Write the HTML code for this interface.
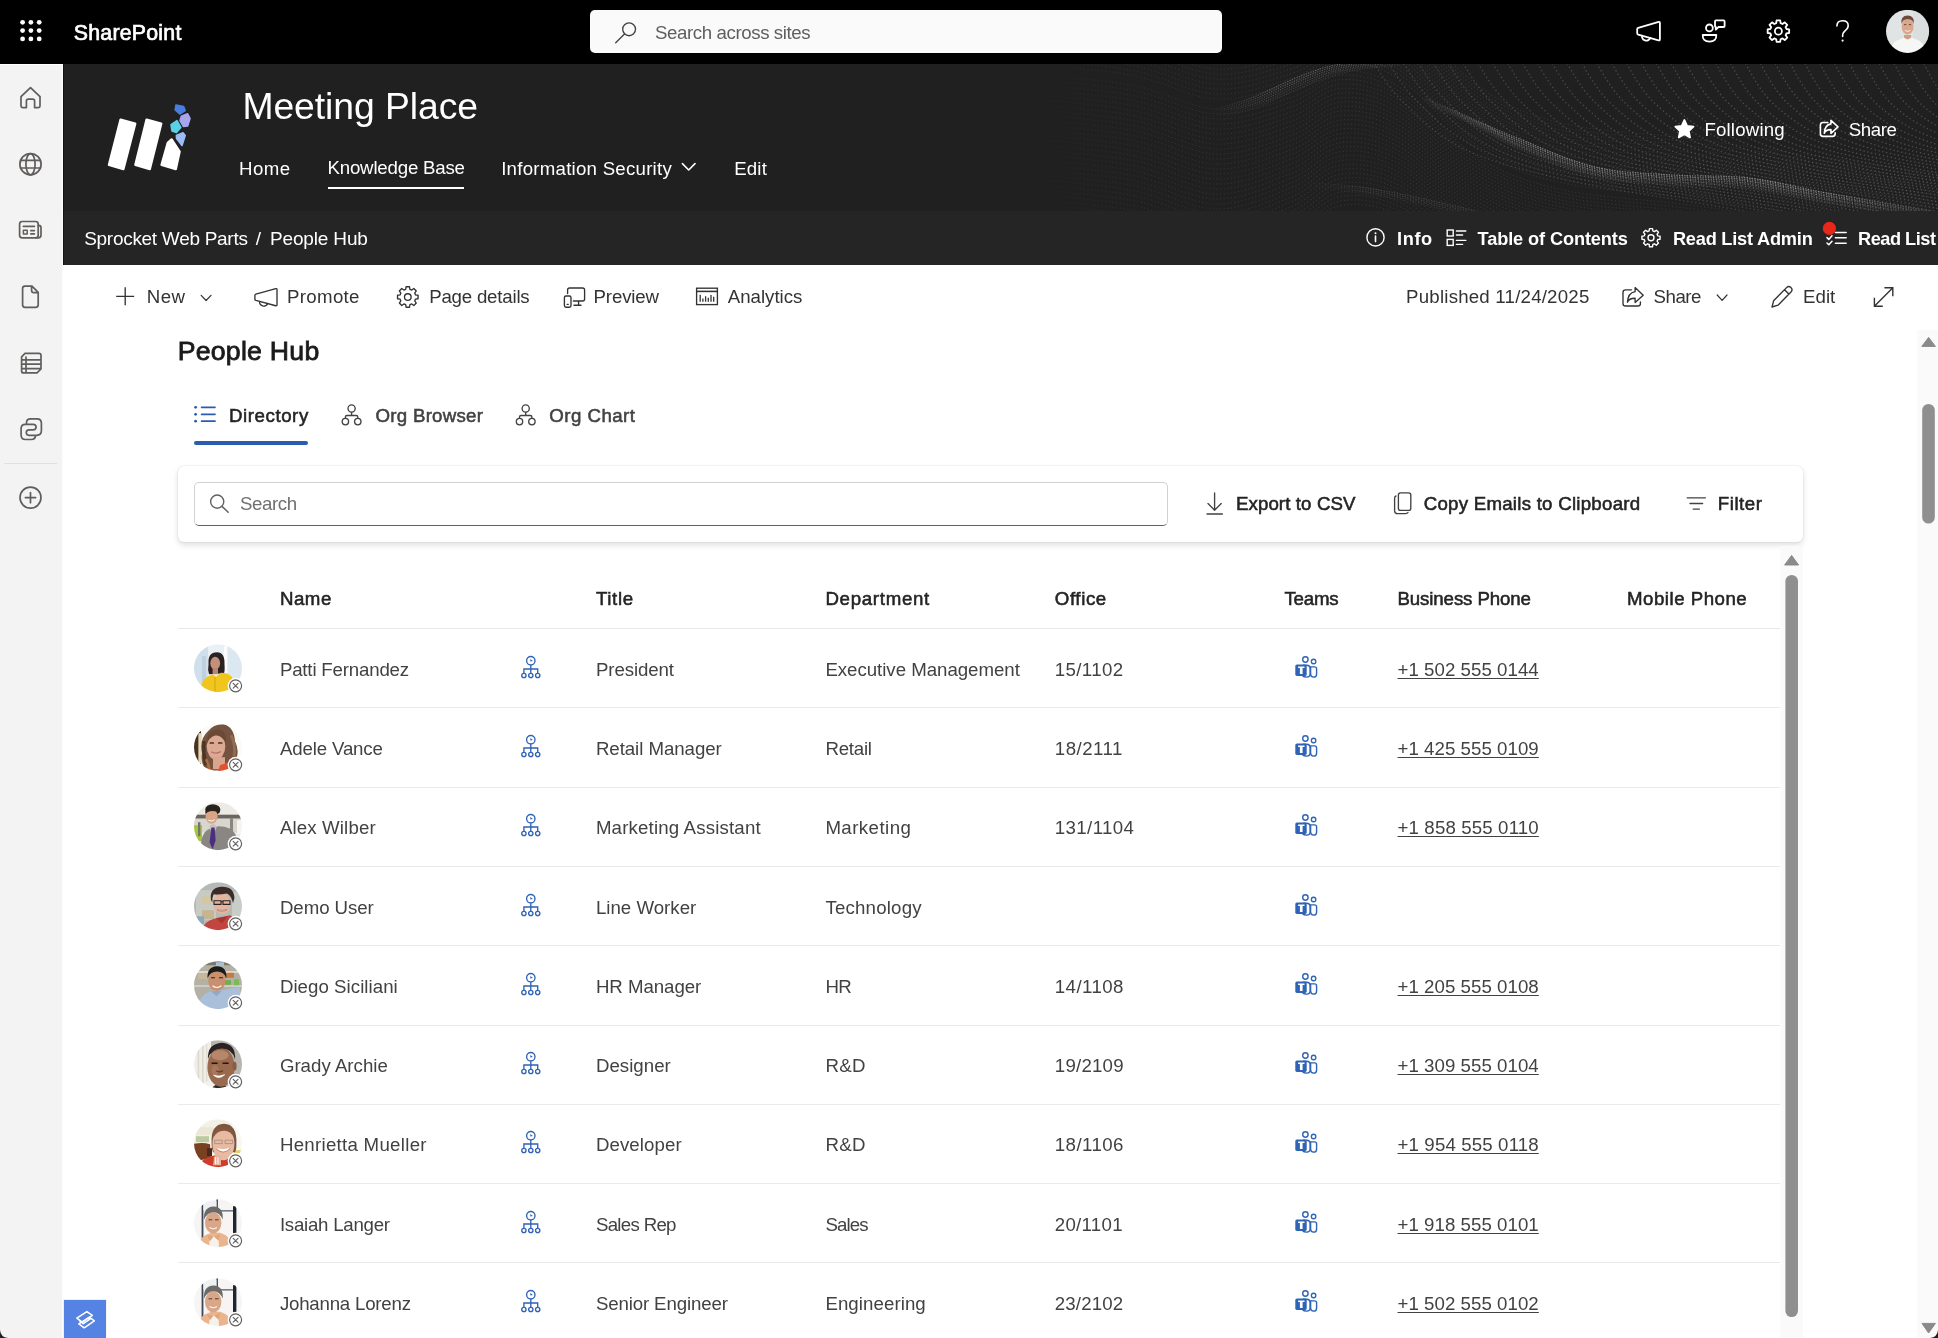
<!DOCTYPE html>
<html lang="en"><head><meta charset="utf-8"><title>People Hub</title>
<style>
*{box-sizing:border-box;margin:0;padding:0}
html,body{width:1938px;height:1338px;overflow:hidden;background:#fff;font-family:"Liberation Sans",sans-serif;}
body{position:relative}
.t{position:absolute;white-space:nowrap;line-height:1;}
.abs{position:absolute}
svg{position:absolute;overflow:visible}
.sb{-webkit-text-stroke:0.55px currentColor}
.sb2{-webkit-text-stroke:0.8px currentColor}
.sb3{-webkit-text-stroke:0.7px currentColor}
#txt{position:absolute;left:0;top:0;width:1938px;height:1338px;will-change:transform}
#suite{position:absolute;left:0;top:0;width:1938px;height:64px;background:#000}
#leftnav{position:absolute;left:0;top:64px;width:63px;height:1274px;background:#f3f3f3;border-top:1px solid #fff;border-right:1px solid #fcfcfc}
#sitehdr{position:absolute;left:63px;top:64px;width:1875px;height:147px;background:#202020;overflow:hidden;border-left:1px solid #111}
#crumbs{position:absolute;left:63px;top:211px;width:1875px;height:54px;background:#252525;border-left:1px solid #131313}
#cmdbar{position:absolute;left:63px;top:265px;width:1875px;height:64px;background:#fff}
#content{position:absolute;left:63px;top:329px;width:1875px;height:1009px;background:#fff}
</style></head>
<body>
<div id="suite"></div>
<div id="leftnav"></div>
<div id="sitehdr"><svg width="1875" height="147" style="left:0;top:0" viewBox="63 64 1875 147"><defs><linearGradient id="wf" x1="0" x2="1" y1="0" y2="0"><stop offset="0" stop-color="#fff" stop-opacity="0"/><stop offset="0.10" stop-color="#fff" stop-opacity="0.7"/><stop offset="0.3" stop-color="#fff" stop-opacity="1"/><stop offset="1" stop-color="#fff" stop-opacity="1"/></linearGradient><mask id="wm" maskUnits="userSpaceOnUse" x="1020" y="64" width="920" height="147"><rect x="1020" y="64" width="920" height="147" fill="url(#wf)"/></mask><linearGradient id="rg1" gradientUnits="userSpaceOnUse" x1="1205" x2="1420" y1="0" y2="0"><stop offset="0" stop-color="#fff" stop-opacity="0"/><stop offset="0.3" stop-color="#fff"/><stop offset="0.8" stop-color="#fff"/><stop offset="1" stop-color="#fff" stop-opacity="0.3"/></linearGradient><linearGradient id="rg2" gradientUnits="userSpaceOnUse" x1="1415" x2="1940" y1="0" y2="0"><stop offset="0" stop-color="#fff" stop-opacity="0"/><stop offset="0.18" stop-color="#fff"/><stop offset="0.75" stop-color="#fff"/><stop offset="1" stop-color="#fff" stop-opacity="0.4"/></linearGradient><linearGradient id="rg3" gradientUnits="userSpaceOnUse" x1="1300" x2="1480" y1="0" y2="0"><stop offset="0" stop-color="#fff" stop-opacity="0"/><stop offset="0.4" stop-color="#fff"/><stop offset="1" stop-color="#fff"/></linearGradient></defs><g mask="url(#wm)" fill="none" stroke="#fff" stroke-linecap="round"><path d="M1015.0 -22.0 C1034.2 -20.0 1096.7 -16.0 1130.0 -10.0 C1163.3 -4.0 1188.3 11.9 1215.0 14.0 C1241.7 16.1 1269.2 7.3 1290.0 2.5 C1310.8 -2.3 1321.7 -15.8 1340.0 -15.0 C1358.3 -14.2 1377.5 -9.1 1400.0 7.5 C1422.5 24.1 1448.3 65.2 1475.0 84.5 C1501.7 103.8 1522.5 113.8 1560.0 123.0 C1597.5 132.2 1635.8 131.3 1700.0 140.0 C1764.2 148.7 1904.2 169.2 1945.0 175.0" stroke-width="1.3" stroke-dasharray="0.1 3.5" stroke-opacity="0.085"/><path d="M1015.0 -17.0 C1034.2 -15.0 1096.7 -11.0 1130.0 -5.0 C1163.3 1.0 1188.3 17.0 1215.0 19.0 C1241.7 21.0 1269.2 12.2 1290.0 7.2 C1310.8 2.3 1321.7 -11.2 1340.0 -10.5 C1358.3 -9.8 1377.5 -4.7 1400.0 11.8 C1422.5 28.2 1448.3 69.1 1475.0 88.2 C1501.7 107.4 1522.5 117.3 1560.0 126.5 C1597.5 135.7 1635.8 134.8 1700.0 143.5 C1764.2 152.2 1904.2 172.7 1945.0 178.5" stroke-width="1.3" stroke-dasharray="0.1 3.5" stroke-opacity="0.085"/><path d="M1015.0 -12.0 C1034.2 -10.0 1096.7 -6.0 1130.0 0.0 C1163.3 6.0 1188.3 22.0 1215.0 24.0 C1241.7 26.0 1269.2 17.0 1290.0 12.0 C1310.8 7.0 1321.7 -6.7 1340.0 -6.0 C1358.3 -5.3 1377.5 -0.3 1400.0 16.0 C1422.5 32.3 1448.3 73.0 1475.0 92.0 C1501.7 111.0 1522.5 120.8 1560.0 130.0 C1597.5 139.2 1635.8 138.3 1700.0 147.0 C1764.2 155.7 1904.2 176.2 1945.0 182.0" stroke-width="1.3" stroke-dasharray="0.1 3.5" stroke-opacity="0.085"/><path d="M1015.0 -7.0 C1034.2 -5.0 1096.7 -1.0 1130.0 5.0 C1163.3 11.0 1188.3 27.0 1215.0 29.0 C1241.7 31.0 1269.2 21.8 1290.0 16.8 C1310.8 11.7 1321.7 -2.1 1340.0 -1.5 C1358.3 -0.9 1377.5 4.0 1400.0 20.2 C1422.5 36.5 1448.3 76.9 1475.0 95.8 C1501.7 114.6 1522.5 124.4 1560.0 133.5 C1597.5 142.6 1635.8 141.8 1700.0 150.5 C1764.2 159.2 1904.2 179.7 1945.0 185.5" stroke-width="1.3" stroke-dasharray="0.1 3.5" stroke-opacity="0.085"/><path d="M1015.0 -2.0 C1034.2 0.0 1096.7 4.0 1130.0 10.0 C1163.3 16.0 1188.3 32.1 1215.0 34.0 C1241.7 35.9 1269.2 26.7 1290.0 21.5 C1310.8 16.3 1321.7 2.5 1340.0 3.0 C1358.3 3.5 1377.5 8.4 1400.0 24.5 C1422.5 40.6 1448.3 80.8 1475.0 99.5 C1501.7 118.2 1522.5 127.9 1560.0 137.0 C1597.5 146.1 1635.8 145.3 1700.0 154.0 C1764.2 162.7 1904.2 183.2 1945.0 189.0" stroke-width="1.3" stroke-dasharray="0.1 3.5" stroke-opacity="0.085"/><path d="M1015.0 3.0 C1034.2 5.0 1096.7 9.0 1130.0 15.0 C1163.3 21.0 1188.3 37.1 1215.0 39.0 C1241.7 40.9 1269.2 31.5 1290.0 26.2 C1310.8 21.0 1321.7 7.1 1340.0 7.5 C1358.3 7.9 1377.5 12.8 1400.0 28.8 C1422.5 44.7 1448.3 84.6 1475.0 103.2 C1501.7 121.9 1522.5 131.5 1560.0 140.5 C1597.5 149.5 1635.8 148.8 1700.0 157.5 C1764.2 166.2 1904.2 186.7 1945.0 192.5" stroke-width="1.3" stroke-dasharray="0.1 3.5" stroke-opacity="0.085"/><path d="M1015.0 8.0 C1034.2 10.0 1096.7 14.0 1130.0 20.0 C1163.3 26.0 1188.3 42.2 1215.0 44.0 C1241.7 45.8 1269.2 36.3 1290.0 31.0 C1310.8 25.7 1321.7 11.7 1340.0 12.0 C1358.3 12.3 1377.5 17.2 1400.0 33.0 C1422.5 48.8 1448.3 88.5 1475.0 107.0 C1501.7 125.5 1522.5 135.0 1560.0 144.0 C1597.5 153.0 1635.8 152.3 1700.0 161.0 C1764.2 169.7 1904.2 190.2 1945.0 196.0" stroke-width="1.3" stroke-dasharray="0.1 3.5" stroke-opacity="0.085"/><path d="M1015.0 13.0 C1034.2 15.0 1096.7 19.0 1130.0 25.0 C1163.3 31.0 1188.3 47.2 1215.0 49.0 C1241.7 50.8 1269.2 41.2 1290.0 35.8 C1310.8 30.3 1321.7 16.2 1340.0 16.5 C1358.3 16.8 1377.5 21.5 1400.0 37.2 C1422.5 53.0 1448.3 92.4 1475.0 110.8 C1501.7 129.1 1522.5 138.5 1560.0 147.5 C1597.5 156.5 1635.8 155.8 1700.0 164.5 C1764.2 173.2 1904.2 193.7 1945.0 199.5" stroke-width="1.3" stroke-dasharray="0.1 3.5" stroke-opacity="0.085"/><path d="M1015.0 18.0 C1034.2 20.0 1096.7 24.0 1130.0 30.0 C1163.3 36.0 1188.3 52.2 1215.0 54.0 C1241.7 55.8 1269.2 46.0 1290.0 40.5 C1310.8 35.0 1321.7 20.8 1340.0 21.0 C1358.3 21.2 1377.5 25.9 1400.0 41.5 C1422.5 57.1 1448.3 96.2 1475.0 114.5 C1501.7 132.8 1522.5 142.1 1560.0 151.0 C1597.5 159.9 1635.8 159.3 1700.0 168.0 C1764.2 176.7 1904.2 197.2 1945.0 203.0" stroke-width="1.3" stroke-dasharray="0.1 3.5" stroke-opacity="0.085"/><path d="M1015.0 23.0 C1034.2 25.0 1096.7 29.0 1130.0 35.0 C1163.3 41.0 1188.3 57.3 1215.0 59.0 C1241.7 60.7 1269.2 50.8 1290.0 45.2 C1310.8 39.7 1321.7 25.4 1340.0 25.5 C1358.3 25.6 1377.5 30.3 1400.0 45.8 C1422.5 61.2 1448.3 100.1 1475.0 118.2 C1501.7 136.4 1522.5 145.6 1560.0 154.5 C1597.5 163.4 1635.8 162.8 1700.0 171.5 C1764.2 180.2 1904.2 200.7 1945.0 206.5" stroke-width="1.3" stroke-dasharray="0.1 3.5" stroke-opacity="0.085"/><path d="M1015.0 28.0 C1034.2 30.0 1096.7 34.0 1130.0 40.0 C1163.3 46.0 1188.3 62.3 1215.0 64.0 C1241.7 65.7 1269.2 55.7 1290.0 50.0 C1310.8 44.3 1321.7 30.0 1340.0 30.0 C1358.3 30.0 1377.5 34.7 1400.0 50.0 C1422.5 65.3 1448.3 104.0 1475.0 122.0 C1501.7 140.0 1522.5 149.2 1560.0 158.0 C1597.5 166.8 1635.8 166.3 1700.0 175.0 C1764.2 183.7 1904.2 204.2 1945.0 210.0" stroke-width="1.3" stroke-dasharray="0.1 3.5" stroke-opacity="0.085"/><path d="M1015.0 33.0 C1034.2 35.0 1096.7 39.0 1130.0 45.0 C1163.3 51.0 1188.3 67.4 1215.0 69.0 C1241.7 70.6 1269.2 60.5 1290.0 54.8 C1310.8 49.0 1321.7 34.6 1340.0 34.5 C1358.3 34.4 1377.5 39.0 1400.0 54.2 C1422.5 69.5 1448.3 107.9 1475.0 125.8 C1501.7 143.6 1522.5 152.7 1560.0 161.5 C1597.5 170.3 1635.8 169.8 1700.0 178.5 C1764.2 187.2 1904.2 207.7 1945.0 213.5" stroke-width="1.3" stroke-dasharray="0.1 3.5" stroke-opacity="0.085"/><path d="M1015.0 38.0 C1034.2 40.0 1096.7 44.0 1130.0 50.0 C1163.3 56.0 1188.3 72.4 1215.0 74.0 C1241.7 75.6 1269.2 65.3 1290.0 59.5 C1310.8 53.7 1321.7 39.2 1340.0 39.0 C1358.3 38.8 1377.5 43.4 1400.0 58.5 C1422.5 73.6 1448.3 111.8 1475.0 129.5 C1501.7 147.2 1522.5 156.2 1560.0 165.0 C1597.5 173.8 1635.8 173.3 1700.0 182.0 C1764.2 190.7 1904.2 211.2 1945.0 217.0" stroke-width="1.3" stroke-dasharray="0.1 3.5" stroke-opacity="0.085"/><path d="M1015.0 43.0 C1034.2 45.0 1096.7 49.0 1130.0 55.0 C1163.3 61.0 1188.3 77.5 1215.0 79.0 C1241.7 80.5 1269.2 70.2 1290.0 64.2 C1310.8 58.3 1321.7 43.8 1340.0 43.5 C1358.3 43.2 1377.5 47.8 1400.0 62.8 C1422.5 77.7 1448.3 115.6 1475.0 133.2 C1501.7 150.9 1522.5 159.8 1560.0 168.5 C1597.5 177.2 1635.8 176.8 1700.0 185.5 C1764.2 194.2 1904.2 214.7 1945.0 220.5" stroke-width="1.3" stroke-dasharray="0.1 3.5" stroke-opacity="0.085"/><path d="M1015.0 48.0 C1034.2 50.0 1096.7 54.0 1130.0 60.0 C1163.3 66.0 1188.3 82.5 1215.0 84.0 C1241.7 85.5 1269.2 75.0 1290.0 69.0 C1310.8 63.0 1321.7 48.3 1340.0 48.0 C1358.3 47.7 1377.5 52.2 1400.0 67.0 C1422.5 81.8 1448.3 119.5 1475.0 137.0 C1501.7 154.5 1522.5 163.3 1560.0 172.0 C1597.5 180.7 1635.8 180.3 1700.0 189.0 C1764.2 197.7 1904.2 218.2 1945.0 224.0" stroke-width="1.3" stroke-dasharray="0.1 3.5" stroke-opacity="0.085"/><path d="M1015.0 53.0 C1034.2 55.0 1096.7 59.0 1130.0 65.0 C1163.3 71.0 1188.3 87.5 1215.0 89.0 C1241.7 90.5 1269.2 79.8 1290.0 73.8 C1310.8 67.7 1321.7 52.9 1340.0 52.5 C1358.3 52.1 1377.5 56.5 1400.0 71.2 C1422.5 86.0 1448.3 123.4 1475.0 140.8 C1501.7 158.1 1522.5 166.9 1560.0 175.5 C1597.5 184.1 1635.8 183.8 1700.0 192.5 C1764.2 201.2 1904.2 221.7 1945.0 227.5" stroke-width="1.3" stroke-dasharray="0.1 3.5" stroke-opacity="0.085"/><path d="M1015.0 58.0 C1034.2 60.0 1096.7 64.0 1130.0 70.0 C1163.3 76.0 1188.3 92.6 1215.0 94.0 C1241.7 95.4 1269.2 84.7 1290.0 78.5 C1310.8 72.3 1321.7 57.5 1340.0 57.0 C1358.3 56.5 1377.5 60.9 1400.0 75.5 C1422.5 90.1 1448.3 127.2 1475.0 144.5 C1501.7 161.8 1522.5 170.4 1560.0 179.0 C1597.5 187.6 1635.8 187.3 1700.0 196.0 C1764.2 204.7 1904.2 225.2 1945.0 231.0" stroke-width="1.3" stroke-dasharray="0.1 3.5" stroke-opacity="0.085"/><path d="M1015.0 63.0 C1034.2 65.0 1096.7 69.0 1130.0 75.0 C1163.3 81.0 1188.3 97.6 1215.0 99.0 C1241.7 100.4 1269.2 89.5 1290.0 83.2 C1310.8 77.0 1321.7 62.1 1340.0 61.5 C1358.3 60.9 1377.5 65.3 1400.0 79.8 C1422.5 94.2 1448.3 131.1 1475.0 148.2 C1501.7 165.4 1522.5 174.0 1560.0 182.5 C1597.5 191.0 1635.8 190.8 1700.0 199.5 C1764.2 208.2 1904.2 228.7 1945.0 234.5" stroke-width="1.3" stroke-dasharray="0.1 3.5" stroke-opacity="0.085"/><path d="M1015.0 68.0 C1034.2 70.0 1096.7 74.0 1130.0 80.0 C1163.3 86.0 1188.3 102.7 1215.0 104.0 C1241.7 105.3 1269.2 94.3 1290.0 88.0 C1310.8 81.7 1321.7 66.7 1340.0 66.0 C1358.3 65.3 1377.5 69.7 1400.0 84.0 C1422.5 98.3 1448.3 135.0 1475.0 152.0 C1501.7 169.0 1522.5 177.5 1560.0 186.0 C1597.5 194.5 1635.8 194.3 1700.0 203.0 C1764.2 211.7 1904.2 232.2 1945.0 238.0" stroke-width="1.3" stroke-dasharray="0.1 3.5" stroke-opacity="0.000"/><path d="M1015.0 73.0 C1034.2 75.0 1096.7 79.0 1130.0 85.0 C1163.3 91.0 1188.3 107.7 1215.0 109.0 C1241.7 110.3 1269.2 99.2 1290.0 92.8 C1310.8 86.3 1321.7 71.2 1340.0 70.5 C1358.3 69.8 1377.5 74.0 1400.0 88.2 C1422.5 102.5 1448.3 138.9 1475.0 155.8 C1501.7 172.6 1522.5 181.0 1560.0 189.5 C1597.5 198.0 1635.8 197.8 1700.0 206.5 C1764.2 215.2 1904.2 235.7 1945.0 241.5" stroke-width="1.3" stroke-dasharray="0.1 3.5" stroke-opacity="0.085"/><path d="M1015.0 78.0 C1034.2 80.0 1096.7 84.0 1130.0 90.0 C1163.3 96.0 1188.3 112.8 1215.0 114.0 C1241.7 115.2 1269.2 104.0 1290.0 97.5 C1310.8 91.0 1321.7 75.8 1340.0 75.0 C1358.3 74.2 1377.5 78.4 1400.0 92.5 C1422.5 106.6 1448.3 142.8 1475.0 159.5 C1501.7 176.2 1522.5 184.6 1560.0 193.0 C1597.5 201.4 1635.8 201.3 1700.0 210.0 C1764.2 218.7 1904.2 239.2 1945.0 245.0" stroke-width="1.3" stroke-dasharray="0.1 3.5" stroke-opacity="0.085"/><path d="M1015.0 83.0 C1034.2 85.0 1096.7 89.0 1130.0 95.0 C1163.3 101.0 1188.3 117.8 1215.0 119.0 C1241.7 120.2 1269.2 108.8 1290.0 102.2 C1310.8 95.7 1321.7 80.4 1340.0 79.5 C1358.3 78.6 1377.5 82.8 1400.0 96.8 C1422.5 110.7 1448.3 146.6 1475.0 163.2 C1501.7 179.9 1522.5 188.1 1560.0 196.5 C1597.5 204.9 1635.8 204.8 1700.0 213.5 C1764.2 222.2 1904.2 242.7 1945.0 248.5" stroke-width="1.3" stroke-dasharray="0.1 3.5" stroke-opacity="0.085"/><path d="M1015.0 88.0 C1034.2 90.0 1096.7 94.0 1130.0 100.0 C1163.3 106.0 1188.3 122.8 1215.0 124.0 C1241.7 125.2 1269.2 113.7 1290.0 107.0 C1310.8 100.3 1321.7 85.0 1340.0 84.0 C1358.3 83.0 1377.5 87.2 1400.0 101.0 C1422.5 114.8 1448.3 150.5 1475.0 167.0 C1501.7 183.5 1522.5 191.7 1560.0 200.0 C1597.5 208.3 1635.8 208.3 1700.0 217.0 C1764.2 225.7 1904.2 246.2 1945.0 252.0" stroke-width="1.3" stroke-dasharray="0.1 3.5" stroke-opacity="0.085"/><path d="M1015.0 93.0 C1034.2 95.0 1096.7 99.0 1130.0 105.0 C1163.3 111.0 1188.3 127.9 1215.0 129.0 C1241.7 130.1 1269.2 118.5 1290.0 111.8 C1310.8 105.0 1321.7 89.6 1340.0 88.5 C1358.3 87.4 1377.5 91.5 1400.0 105.2 C1422.5 119.0 1448.3 154.4 1475.0 170.8 C1501.7 187.1 1522.5 195.2 1560.0 203.5 C1597.5 211.8 1635.8 211.8 1700.0 220.5 C1764.2 229.2 1904.2 249.7 1945.0 255.5" stroke-width="1.3" stroke-dasharray="0.1 3.5" stroke-opacity="0.085"/><path d="M1015.0 98.0 C1034.2 100.0 1096.7 104.0 1130.0 110.0 C1163.3 116.0 1188.3 132.9 1215.0 134.0 C1241.7 135.1 1269.2 123.3 1290.0 116.5 C1310.8 109.7 1321.7 94.2 1340.0 93.0 C1358.3 91.8 1377.5 95.9 1400.0 109.5 C1422.5 123.1 1448.3 158.2 1475.0 174.5 C1501.7 190.8 1522.5 198.8 1560.0 207.0 C1597.5 215.2 1635.8 215.3 1700.0 224.0 C1764.2 232.7 1904.2 253.2 1945.0 259.0" stroke-width="1.3" stroke-dasharray="0.1 3.5" stroke-opacity="0.085"/><path d="M1015.0 103.0 C1034.2 105.0 1096.7 109.0 1130.0 115.0 C1163.3 121.0 1188.3 138.0 1215.0 139.0 C1241.7 140.0 1269.2 128.2 1290.0 121.2 C1310.8 114.3 1321.7 98.8 1340.0 97.5 C1358.3 96.2 1377.5 100.3 1400.0 113.8 C1422.5 127.2 1448.3 162.1 1475.0 178.2 C1501.7 194.4 1522.5 202.3 1560.0 210.5 C1597.5 218.7 1635.8 218.8 1700.0 227.5 C1764.2 236.2 1904.2 256.7 1945.0 262.5" stroke-width="1.3" stroke-dasharray="0.1 3.5" stroke-opacity="0.085"/><path d="M1015.0 108.0 C1034.2 110.0 1096.7 114.0 1130.0 120.0 C1163.3 126.0 1188.3 143.0 1215.0 144.0 C1241.7 145.0 1269.2 133.0 1290.0 126.0 C1310.8 119.0 1321.7 103.3 1340.0 102.0 C1358.3 100.7 1377.5 104.7 1400.0 118.0 C1422.5 131.3 1448.3 166.0 1475.0 182.0 C1501.7 198.0 1522.5 205.8 1560.0 214.0 C1597.5 222.2 1635.8 222.3 1700.0 231.0 C1764.2 239.7 1904.2 260.2 1945.0 266.0" stroke-width="1.3" stroke-dasharray="0.1 3.5" stroke-opacity="0.085"/><path d="M1015.0 113.0 C1034.2 115.0 1096.7 119.0 1130.0 125.0 C1163.3 131.0 1188.3 148.0 1215.0 149.0 C1241.7 150.0 1269.2 137.8 1290.0 130.8 C1310.8 123.7 1321.7 107.9 1340.0 106.5 C1358.3 105.1 1377.5 109.0 1400.0 122.2 C1422.5 135.5 1448.3 169.9 1475.0 185.8 C1501.7 201.6 1522.5 209.4 1560.0 217.5 C1597.5 225.6 1635.8 225.8 1700.0 234.5 C1764.2 243.2 1904.2 263.7 1945.0 269.5" stroke-width="1.3" stroke-dasharray="0.1 3.5" stroke-opacity="0.085"/><path d="M1015.0 118.0 C1034.2 120.0 1096.7 124.0 1130.0 130.0 C1163.3 136.0 1188.3 153.1 1215.0 154.0 C1241.7 154.9 1269.2 142.7 1290.0 135.5 C1310.8 128.3 1321.7 112.5 1340.0 111.0 C1358.3 109.5 1377.5 113.4 1400.0 126.5 C1422.5 139.6 1448.3 173.8 1475.0 189.5 C1501.7 205.2 1522.5 212.9 1560.0 221.0 C1597.5 229.1 1635.8 229.3 1700.0 238.0 C1764.2 246.7 1904.2 267.2 1945.0 273.0" stroke-width="1.3" stroke-dasharray="0.1 3.5" stroke-opacity="0.085"/><path d="M1015.0 123.0 C1034.2 125.0 1096.7 129.0 1130.0 135.0 C1163.3 141.0 1188.3 158.1 1215.0 159.0 C1241.7 159.9 1269.2 147.5 1290.0 140.2 C1310.8 133.0 1321.7 117.1 1340.0 115.5 C1358.3 113.9 1377.5 117.8 1400.0 130.8 C1422.5 143.7 1448.3 177.6 1475.0 193.2 C1501.7 208.9 1522.5 216.5 1560.0 224.5 C1597.5 232.5 1635.8 232.8 1700.0 241.5 C1764.2 250.2 1904.2 270.7 1945.0 276.5" stroke-width="1.3" stroke-dasharray="0.1 3.5" stroke-opacity="0.085"/><path d="M1015.0 128.0 C1034.2 130.0 1096.7 134.0 1130.0 140.0 C1163.3 146.0 1188.3 163.2 1215.0 164.0 C1241.7 164.8 1269.2 152.3 1290.0 145.0 C1310.8 137.7 1321.7 121.7 1340.0 120.0 C1358.3 118.3 1377.5 122.2 1400.0 135.0 C1422.5 147.8 1448.3 181.5 1475.0 197.0 C1501.7 212.5 1522.5 220.0 1560.0 228.0 C1597.5 236.0 1635.8 236.3 1700.0 245.0 C1764.2 253.7 1904.2 274.2 1945.0 280.0" stroke-width="1.3" stroke-dasharray="0.1 3.5" stroke-opacity="0.085"/><path d="M1015.0 133.0 C1034.2 135.0 1096.7 139.0 1130.0 145.0 C1163.3 151.0 1188.3 168.2 1215.0 169.0 C1241.7 169.8 1269.2 157.2 1290.0 149.8 C1310.8 142.3 1321.7 126.2 1340.0 124.5 C1358.3 122.8 1377.5 126.5 1400.0 139.2 C1422.5 152.0 1448.3 185.4 1475.0 200.8 C1501.7 216.1 1522.5 223.5 1560.0 231.5 C1597.5 239.5 1635.8 239.8 1700.0 248.5 C1764.2 257.2 1904.2 277.7 1945.0 283.5" stroke-width="1.3" stroke-dasharray="0.1 3.5" stroke-opacity="0.085"/><path d="M1015.0 138.0 C1034.2 140.0 1096.7 144.0 1130.0 150.0 C1163.3 156.0 1188.3 173.2 1215.0 174.0 C1241.7 174.8 1269.2 162.0 1290.0 154.5 C1310.8 147.0 1321.7 130.8 1340.0 129.0 C1358.3 127.2 1377.5 130.9 1400.0 143.5 C1422.5 156.1 1448.3 189.2 1475.0 204.5 C1501.7 219.8 1522.5 227.1 1560.0 235.0 C1597.5 242.9 1635.8 243.3 1700.0 252.0 C1764.2 260.7 1904.2 281.2 1945.0 287.0" stroke-width="1.3" stroke-dasharray="0.1 3.5" stroke-opacity="0.085"/><path d="M1015.0 143.0 C1034.2 145.0 1096.7 149.0 1130.0 155.0 C1163.3 161.0 1188.3 178.3 1215.0 179.0 C1241.7 179.7 1269.2 166.8 1290.0 159.2 C1310.8 151.7 1321.7 135.4 1340.0 133.5 C1358.3 131.6 1377.5 135.3 1400.0 147.8 C1422.5 160.2 1448.3 193.1 1475.0 208.2 C1501.7 223.4 1522.5 230.6 1560.0 238.5 C1597.5 246.4 1635.8 246.8 1700.0 255.5 C1764.2 264.2 1904.2 284.7 1945.0 290.5" stroke-width="1.3" stroke-dasharray="0.1 3.5" stroke-opacity="0.085"/><path d="M1015.0 148.0 C1034.2 150.0 1096.7 154.0 1130.0 160.0 C1163.3 166.0 1188.3 183.3 1215.0 184.0 C1241.7 184.7 1269.2 171.7 1290.0 164.0 C1310.8 156.3 1321.7 140.0 1340.0 138.0 C1358.3 136.0 1377.5 139.7 1400.0 152.0 C1422.5 164.3 1448.3 197.0 1475.0 212.0 C1501.7 227.0 1522.5 234.2 1560.0 242.0 C1597.5 249.8 1635.8 250.3 1700.0 259.0 C1764.2 267.7 1904.2 288.2 1945.0 294.0" stroke-width="1.3" stroke-dasharray="0.1 3.5" stroke-opacity="0.085"/><path d="M1015.0 153.0 C1034.2 155.0 1096.7 159.0 1130.0 165.0 C1163.3 171.0 1188.3 188.4 1215.0 189.0 C1241.7 189.6 1269.2 176.5 1290.0 168.8 C1310.8 161.0 1321.7 144.6 1340.0 142.5 C1358.3 140.4 1377.5 144.0 1400.0 156.2 C1422.5 168.5 1448.3 200.9 1475.0 215.8 C1501.7 230.6 1522.5 237.7 1560.0 245.5 C1597.5 253.3 1635.8 253.8 1700.0 262.5 C1764.2 271.2 1904.2 291.7 1945.0 297.5" stroke-width="1.3" stroke-dasharray="0.1 3.5" stroke-opacity="0.085"/><path d="M1015.0 158.0 C1034.2 160.0 1096.7 164.0 1130.0 170.0 C1163.3 176.0 1188.3 193.4 1215.0 194.0 C1241.7 194.6 1269.2 181.3 1290.0 173.5 C1310.8 165.7 1321.7 149.2 1340.0 147.0 C1358.3 144.8 1377.5 148.4 1400.0 160.5 C1422.5 172.6 1448.3 204.8 1475.0 219.5 C1501.7 234.2 1522.5 241.2 1560.0 249.0 C1597.5 256.8 1635.8 257.3 1700.0 266.0 C1764.2 274.7 1904.2 295.2 1945.0 301.0" stroke-width="1.3" stroke-dasharray="0.1 3.5" stroke-opacity="0.085"/><path d="M1015.0 163.0 C1034.2 165.0 1096.7 169.0 1130.0 175.0 C1163.3 181.0 1188.3 198.5 1215.0 199.0 C1241.7 199.5 1269.2 186.2 1290.0 178.2 C1310.8 170.3 1321.7 153.8 1340.0 151.5 C1358.3 149.2 1377.5 152.8 1400.0 164.8 C1422.5 176.7 1448.3 208.6 1475.0 223.2 C1501.7 237.9 1522.5 244.8 1560.0 252.5 C1597.5 260.2 1635.8 260.8 1700.0 269.5 C1764.2 278.2 1904.2 298.7 1945.0 304.5" stroke-width="1.3" stroke-dasharray="0.1 3.5" stroke-opacity="0.085"/><path d="M1015.0 168.0 C1034.2 170.0 1096.7 174.0 1130.0 180.0 C1163.3 186.0 1188.3 203.5 1215.0 204.0 C1241.7 204.5 1269.2 191.0 1290.0 183.0 C1310.8 175.0 1321.7 158.3 1340.0 156.0 C1358.3 153.7 1377.5 157.2 1400.0 169.0 C1422.5 180.8 1448.3 212.5 1475.0 227.0 C1501.7 241.5 1522.5 248.3 1560.0 256.0 C1597.5 263.7 1635.8 264.3 1700.0 273.0 C1764.2 281.7 1904.2 302.2 1945.0 308.0" stroke-width="1.3" stroke-dasharray="0.1 3.5" stroke-opacity="0.085"/><path d="M1015.0 173.0 C1034.2 175.0 1096.7 179.0 1130.0 185.0 C1163.3 191.0 1188.3 208.5 1215.0 209.0 C1241.7 209.5 1269.2 195.8 1290.0 187.8 C1310.8 179.7 1321.7 162.9 1340.0 160.5 C1358.3 158.1 1377.5 161.5 1400.0 173.2 C1422.5 185.0 1448.3 216.4 1475.0 230.8 C1501.7 245.1 1522.5 251.9 1560.0 259.5 C1597.5 267.1 1635.8 267.8 1700.0 276.5 C1764.2 285.2 1904.2 305.7 1945.0 311.5" stroke-width="1.3" stroke-dasharray="0.1 3.5" stroke-opacity="0.085"/><path d="M1015.0 178.0 C1034.2 180.0 1096.7 184.0 1130.0 190.0 C1163.3 196.0 1188.3 213.6 1215.0 214.0 C1241.7 214.4 1269.2 200.7 1290.0 192.5 C1310.8 184.3 1321.7 167.5 1340.0 165.0 C1358.3 162.5 1377.5 165.9 1400.0 177.5 C1422.5 189.1 1448.3 220.2 1475.0 234.5 C1501.7 248.8 1522.5 255.4 1560.0 263.0 C1597.5 270.6 1635.8 271.3 1700.0 280.0 C1764.2 288.7 1904.2 309.2 1945.0 315.0" stroke-width="1.3" stroke-dasharray="0.1 3.5" stroke-opacity="0.085"/><path d="M1015.0 183.0 C1034.2 185.0 1096.7 189.0 1130.0 195.0 C1163.3 201.0 1188.3 218.6 1215.0 219.0 C1241.7 219.4 1269.2 205.5 1290.0 197.2 C1310.8 189.0 1321.7 172.1 1340.0 169.5 C1358.3 166.9 1377.5 170.3 1400.0 181.8 C1422.5 193.2 1448.3 224.1 1475.0 238.2 C1501.7 252.4 1522.5 259.0 1560.0 266.5 C1597.5 274.0 1635.8 274.8 1700.0 283.5 C1764.2 292.2 1904.2 312.7 1945.0 318.5" stroke-width="1.3" stroke-dasharray="0.1 3.5" stroke-opacity="0.085"/><path d="M1015.0 188.0 C1034.2 190.0 1096.7 194.0 1130.0 200.0 C1163.3 206.0 1188.3 223.7 1215.0 224.0 C1241.7 224.3 1269.2 210.3 1290.0 202.0 C1310.8 193.7 1321.7 176.7 1340.0 174.0 C1358.3 171.3 1377.5 174.7 1400.0 186.0 C1422.5 197.3 1448.3 228.0 1475.0 242.0 C1501.7 256.0 1522.5 262.5 1560.0 270.0 C1597.5 277.5 1635.8 278.3 1700.0 287.0 C1764.2 295.7 1904.2 316.2 1945.0 322.0" stroke-width="1.3" stroke-dasharray="0.1 3.5" stroke-opacity="0.085"/><path d="M1015.0 193.0 C1034.2 195.0 1096.7 199.0 1130.0 205.0 C1163.3 211.0 1188.3 228.7 1215.0 229.0 C1241.7 229.3 1269.2 215.2 1290.0 206.8 C1310.8 198.3 1321.7 181.2 1340.0 178.5 C1358.3 175.8 1377.5 179.0 1400.0 190.2 C1422.5 201.5 1448.3 231.9 1475.0 245.8 C1501.7 259.6 1522.5 266.0 1560.0 273.5 C1597.5 281.0 1635.8 281.8 1700.0 290.5 C1764.2 299.2 1904.2 319.7 1945.0 325.5" stroke-width="1.3" stroke-dasharray="0.1 3.5" stroke-opacity="0.085"/><path d="M1015.0 198.0 C1034.2 200.0 1096.7 204.0 1130.0 210.0 C1163.3 216.0 1188.3 233.8 1215.0 234.0 C1241.7 234.2 1269.2 220.0 1290.0 211.5 C1310.8 203.0 1321.7 185.8 1340.0 183.0 C1358.3 180.2 1377.5 183.4 1400.0 194.5 C1422.5 205.6 1448.3 235.8 1475.0 249.5 C1501.7 263.2 1522.5 269.6 1560.0 277.0 C1597.5 284.4 1635.8 285.3 1700.0 294.0 C1764.2 302.7 1904.2 323.2 1945.0 329.0" stroke-width="1.3" stroke-dasharray="0.1 3.5" stroke-opacity="0.085"/><path d="M1015.0 203.0 C1034.2 205.0 1096.7 209.0 1130.0 215.0 C1163.3 221.0 1188.3 238.8 1215.0 239.0 C1241.7 239.2 1269.2 224.8 1290.0 216.2 C1310.8 207.7 1321.7 190.4 1340.0 187.5 C1358.3 184.6 1377.5 187.8 1400.0 198.8 C1422.5 209.7 1448.3 239.6 1475.0 253.2 C1501.7 266.9 1522.5 273.1 1560.0 280.5 C1597.5 287.9 1635.8 288.8 1700.0 297.5 C1764.2 306.2 1904.2 326.7 1945.0 332.5" stroke-width="1.3" stroke-dasharray="0.1 3.5" stroke-opacity="0.085"/><path d="M1015.0 208.0 C1034.2 210.0 1096.7 214.0 1130.0 220.0 C1163.3 226.0 1188.3 243.8 1215.0 244.0 C1241.7 244.2 1269.2 229.7 1290.0 221.0 C1310.8 212.3 1321.7 195.0 1340.0 192.0 C1358.3 189.0 1377.5 192.2 1400.0 203.0 C1422.5 213.8 1448.3 243.5 1475.0 257.0 C1501.7 270.5 1522.5 276.7 1560.0 284.0 C1597.5 291.3 1635.8 292.3 1700.0 301.0 C1764.2 309.7 1904.2 330.2 1945.0 336.0" stroke-width="1.3" stroke-dasharray="0.1 3.5" stroke-opacity="0.085"/><path d="M1015.0 213.0 C1034.2 215.0 1096.7 219.0 1130.0 225.0 C1163.3 231.0 1188.3 248.9 1215.0 249.0 C1241.7 249.1 1269.2 234.5 1290.0 225.8 C1310.8 217.0 1321.7 199.6 1340.0 196.5 C1358.3 193.4 1377.5 196.5 1400.0 207.2 C1422.5 218.0 1448.3 247.4 1475.0 260.8 C1501.7 274.1 1522.5 280.2 1560.0 287.5 C1597.5 294.8 1635.8 295.8 1700.0 304.5 C1764.2 313.2 1904.2 333.7 1945.0 339.5" stroke-width="1.3" stroke-dasharray="0.1 3.5" stroke-opacity="0.085"/><path d="M1015.0 218.0 C1034.2 220.0 1096.7 224.0 1130.0 230.0 C1163.3 236.0 1188.3 253.9 1215.0 254.0 C1241.7 254.1 1269.2 239.3 1290.0 230.5 C1310.8 221.7 1321.7 204.2 1340.0 201.0 C1358.3 197.8 1377.5 200.9 1400.0 211.5 C1422.5 222.1 1448.3 251.2 1475.0 264.5 C1501.7 277.8 1522.5 283.8 1560.0 291.0 C1597.5 298.2 1635.8 299.3 1700.0 308.0 C1764.2 316.7 1904.2 337.2 1945.0 343.0" stroke-width="1.3" stroke-dasharray="0.1 3.5" stroke-opacity="0.085"/><path d="M1015.0 223.0 C1034.2 225.0 1096.7 229.0 1130.0 235.0 C1163.3 241.0 1188.3 259.0 1215.0 259.0 C1241.7 259.0 1269.2 244.2 1290.0 235.2 C1310.8 226.3 1321.7 208.8 1340.0 205.5 C1358.3 202.2 1377.5 205.3 1400.0 215.8 C1422.5 226.2 1448.3 255.1 1475.0 268.2 C1501.7 281.4 1522.5 287.3 1560.0 294.5 C1597.5 301.7 1635.8 302.8 1700.0 311.5 C1764.2 320.2 1904.2 340.7 1945.0 346.5" stroke-width="1.3" stroke-dasharray="0.1 3.5" stroke-opacity="0.085"/><path d="M1205.0 112.0 C1212.5 109.7 1235.0 103.7 1250.0 98.0 C1265.0 92.3 1280.8 83.5 1295.0 78.0 C1309.2 72.5 1317.5 68.3 1335.0 65.0 C1352.5 61.7 1389.2 59.2 1400.0 58.0" stroke="url(#rg1)" stroke-width="1.3" stroke-dasharray="0.1 2.4" stroke-opacity="0.300"/><path d="M1207.0 113.5 C1214.5 111.2 1237.0 105.2 1252.0 99.5 C1267.0 93.8 1282.7 85.0 1297.0 79.5 C1311.3 74.0 1320.2 69.6 1338.0 66.2 C1355.8 62.8 1393.0 60.2 1404.0 59.0" stroke="url(#rg1)" stroke-width="1.3" stroke-dasharray="0.1 2.4" stroke-opacity="0.260"/><path d="M1209.0 115.0 C1216.5 112.7 1239.0 106.7 1254.0 101.0 C1269.0 95.3 1284.5 86.6 1299.0 81.0 C1313.5 75.4 1322.8 70.9 1341.0 67.4 C1359.2 63.9 1396.8 61.2 1408.0 60.0" stroke="url(#rg1)" stroke-width="1.3" stroke-dasharray="0.1 2.4" stroke-opacity="0.220"/><path d="M1211.0 116.5 C1218.5 114.2 1241.0 108.2 1256.0 102.5 C1271.0 96.8 1286.3 88.2 1301.0 82.5 C1315.7 76.8 1325.5 72.2 1344.0 68.6 C1362.5 65.0 1400.7 62.3 1412.0 61.0" stroke="url(#rg1)" stroke-width="1.3" stroke-dasharray="0.1 2.4" stroke-opacity="0.180"/><path d="M1213.0 118.0 C1220.5 115.7 1243.0 109.7 1258.0 104.0 C1273.0 98.3 1288.2 89.7 1303.0 84.0 C1317.8 78.3 1328.2 73.5 1347.0 69.8 C1365.8 66.1 1404.5 63.3 1416.0 62.0" stroke="url(#rg1)" stroke-width="1.3" stroke-dasharray="0.1 2.4" stroke-opacity="0.140"/><path d="M1215.0 119.5 C1222.5 117.2 1245.0 111.2 1260.0 105.5 C1275.0 99.8 1290.0 91.2 1305.0 85.5 C1320.0 79.8 1330.8 74.8 1350.0 71.0 C1369.2 67.2 1408.3 64.3 1420.0 63.0" stroke="url(#rg1)" stroke-width="1.3" stroke-dasharray="0.1 2.4" stroke-opacity="0.100"/><path d="M1365.0 50.0 C1370.8 58.3 1383.3 83.3 1400.0 100.0 C1416.7 116.7 1435.8 136.3 1465.0 150.0 C1494.2 163.7 1533.3 172.7 1575.0 182.0 C1616.7 191.3 1666.7 197.7 1715.0 206.0 C1763.3 214.3 1840.0 227.7 1865.0 232.0" stroke-width="1.45" stroke-dasharray="0.1 3.9" stroke-opacity="0.150"/><path d="M1379.9 50.0 C1385.7 58.4 1398.2 83.5 1414.9 100.1 C1431.6 116.8 1450.7 136.2 1479.9 149.7 C1509.1 163.3 1548.2 172.2 1589.9 181.4 C1631.6 190.7 1681.6 197.0 1729.9 205.3 C1778.2 213.6 1854.9 227.0 1879.9 231.3" stroke-width="1.45" stroke-dasharray="0.1 3.9" stroke-opacity="0.153"/><path d="M1394.8 50.0 C1400.6 58.4 1413.1 83.7 1429.8 100.3 C1446.4 116.9 1465.6 136.0 1494.8 149.4 C1523.9 162.9 1563.1 171.7 1604.8 180.9 C1646.4 190.1 1696.4 196.3 1744.8 204.6 C1793.1 212.9 1869.8 226.3 1894.8 230.6" stroke-width="1.45" stroke-dasharray="0.1 3.9" stroke-opacity="0.156"/><path d="M1409.7 50.0 C1415.5 58.4 1428.0 83.9 1444.7 100.4 C1461.3 116.9 1480.5 135.8 1509.7 149.2 C1538.8 162.5 1578.0 171.2 1619.7 180.3 C1661.3 189.4 1711.3 195.6 1759.7 203.9 C1808.0 212.2 1884.7 225.6 1909.7 229.9" stroke-width="1.45" stroke-dasharray="0.1 3.9" stroke-opacity="0.160"/><path d="M1424.5 50.0 C1430.4 58.4 1442.9 84.1 1459.5 100.6 C1476.2 117.0 1495.4 135.7 1524.5 148.9 C1553.7 162.1 1592.9 170.7 1634.5 179.8 C1676.2 188.8 1726.2 195.0 1774.5 203.2 C1822.9 211.4 1899.5 224.9 1924.5 229.2" stroke-width="1.45" stroke-dasharray="0.1 3.9" stroke-opacity="0.163"/><path d="M1439.4 50.0 C1445.3 58.4 1457.8 84.3 1474.4 100.7 C1491.1 117.1 1510.3 135.5 1539.4 148.6 C1568.6 161.7 1607.8 170.2 1649.4 179.2 C1691.1 188.2 1741.1 194.3 1789.4 202.5 C1837.8 210.7 1914.4 224.2 1939.4 228.5" stroke-width="1.45" stroke-dasharray="0.1 3.9" stroke-opacity="0.166"/><path d="M1454.3 50.0 C1460.1 58.5 1472.6 84.4 1489.3 100.8 C1506.0 117.2 1525.1 135.4 1554.3 148.3 C1583.5 161.3 1622.6 169.7 1664.3 178.7 C1706.0 187.6 1756.0 193.6 1804.3 201.8 C1852.6 210.0 1929.3 223.5 1954.3 227.8" stroke-width="1.45" stroke-dasharray="0.1 3.9" stroke-opacity="0.169"/><path d="M1469.2 50.0 C1475.0 58.5 1487.5 84.6 1504.2 101.0 C1520.9 117.3 1540.0 135.2 1569.2 148.0 C1598.4 160.9 1637.5 169.2 1679.2 178.1 C1720.9 186.9 1770.9 192.9 1819.2 201.1 C1867.5 209.3 1944.2 222.8 1969.2 227.1" stroke-width="1.45" stroke-dasharray="0.1 3.9" stroke-opacity="0.172"/><path d="M1484.1 50.0 C1489.9 58.5 1502.4 84.8 1519.1 101.1 C1535.7 117.4 1554.9 135.0 1584.1 147.8 C1613.2 160.5 1652.4 168.8 1694.1 177.5 C1735.7 186.3 1785.7 192.3 1834.1 200.4 C1882.4 208.6 1959.1 222.1 1984.1 226.4" stroke-width="1.45" stroke-dasharray="0.1 3.9" stroke-opacity="0.175"/><path d="M1499.0 50.0 C1504.8 58.5 1517.3 85.0 1534.0 101.3 C1550.6 117.5 1569.8 134.9 1599.0 147.5 C1628.1 160.1 1667.3 168.3 1709.0 177.0 C1750.6 185.7 1800.6 191.6 1849.0 199.7 C1897.3 207.8 1974.0 221.4 1999.0 225.7" stroke-width="1.45" stroke-dasharray="0.1 3.9" stroke-opacity="0.178"/><path d="M1513.8 50.0 C1519.7 58.6 1532.2 85.2 1548.8 101.4 C1565.5 117.6 1584.7 134.7 1613.8 147.2 C1643.0 159.7 1682.2 167.8 1723.8 176.4 C1765.5 185.1 1815.5 190.9 1863.8 199.0 C1912.2 207.1 1988.8 220.7 2013.8 225.0" stroke-width="1.45" stroke-dasharray="0.1 3.9" stroke-opacity="0.180"/><path d="M1528.7 50.0 C1534.6 58.6 1547.1 85.4 1563.7 101.5 C1580.4 117.7 1599.6 134.5 1628.7 146.9 C1657.9 159.3 1697.1 167.3 1738.7 175.9 C1780.4 184.4 1830.4 190.2 1878.7 198.3 C1927.1 206.4 2003.7 220.0 2028.7 224.3" stroke-width="1.45" stroke-dasharray="0.1 3.9" stroke-opacity="0.183"/><path d="M1543.6 50.0 C1549.4 58.6 1561.9 85.6 1578.6 101.7 C1595.3 117.8 1614.4 134.4 1643.6 146.7 C1672.8 158.9 1711.9 166.8 1753.6 175.3 C1795.3 183.8 1845.3 189.6 1893.6 197.6 C1941.9 205.7 2018.6 219.3 2043.6 223.6" stroke-width="1.45" stroke-dasharray="0.1 3.9" stroke-opacity="0.185"/><path d="M1558.5 50.0 C1564.3 58.6 1576.8 85.8 1593.5 101.8 C1610.2 117.9 1629.3 134.2 1658.5 146.4 C1687.7 158.5 1726.8 166.3 1768.5 174.7 C1810.2 183.2 1860.2 188.9 1908.5 196.9 C1956.8 205.0 2033.5 218.6 2058.5 222.9" stroke-width="1.45" stroke-dasharray="0.1 3.9" stroke-opacity="0.187"/><path d="M1573.4 50.0 C1579.2 58.7 1591.7 85.9 1608.4 102.0 C1625.0 118.0 1644.2 134.1 1673.4 146.1 C1702.5 158.1 1741.7 165.8 1783.4 174.2 C1825.0 182.5 1875.0 188.2 1923.4 196.2 C1971.7 204.2 2048.4 217.9 2073.4 222.2" stroke-width="1.45" stroke-dasharray="0.1 3.9" stroke-opacity="0.190"/><path d="M1588.3 50.0 C1594.1 58.7 1606.6 86.1 1623.3 102.1 C1639.9 118.1 1659.1 133.9 1688.3 145.8 C1717.4 157.7 1756.6 165.3 1798.3 173.6 C1839.9 181.9 1889.9 187.6 1938.3 195.5 C1986.6 203.5 2063.3 217.2 2088.3 221.5" stroke-width="1.45" stroke-dasharray="0.1 3.9" stroke-opacity="0.191"/><path d="M1603.1 50.0 C1609.0 58.7 1621.5 86.3 1638.1 102.2 C1654.8 118.2 1674.0 133.7 1703.1 145.5 C1732.3 157.3 1771.5 164.9 1813.1 173.1 C1854.8 181.3 1904.8 186.9 1953.1 194.8 C2001.5 202.8 2078.1 216.5 2103.1 220.8" stroke-width="1.45" stroke-dasharray="0.1 3.9" stroke-opacity="0.193"/><path d="M1618.0 50.0 C1623.9 58.7 1636.4 86.5 1653.0 102.4 C1669.7 118.2 1688.9 133.6 1718.0 145.3 C1747.2 156.9 1786.4 164.4 1828.0 172.5 C1869.7 180.7 1919.7 186.2 1968.0 194.1 C2016.4 202.1 2093.0 215.8 2118.0 220.1" stroke-width="1.45" stroke-dasharray="0.1 3.9" stroke-opacity="0.195"/><path d="M1632.9 50.0 C1638.7 58.8 1651.2 86.7 1667.9 102.5 C1684.6 118.3 1703.7 133.4 1732.9 145.0 C1762.1 156.6 1801.2 163.9 1842.9 172.0 C1884.6 180.0 1934.6 185.5 1982.9 193.4 C2031.2 201.4 2107.9 215.1 2132.9 219.4" stroke-width="1.45" stroke-dasharray="0.1 3.9" stroke-opacity="0.196"/><path d="M1647.8 50.0 C1653.6 58.8 1666.1 86.9 1682.8 102.7 C1699.5 118.4 1718.6 133.2 1747.8 144.7 C1777.0 156.2 1816.1 163.4 1857.8 171.4 C1899.5 179.4 1949.5 184.9 1997.8 192.7 C2046.1 200.6 2122.8 214.4 2147.8 218.7" stroke-width="1.45" stroke-dasharray="0.1 3.9" stroke-opacity="0.197"/><path d="M1662.7 50.0 C1668.5 58.8 1681.0 87.1 1697.7 102.8 C1714.3 118.5 1733.5 133.1 1762.7 144.4 C1791.8 155.8 1831.0 162.9 1872.7 170.8 C1914.3 178.8 1964.3 184.2 2012.7 192.0 C2061.0 199.9 2137.7 213.7 2162.7 218.0" stroke-width="1.45" stroke-dasharray="0.1 3.9" stroke-opacity="0.198"/><path d="M1677.6 50.0 C1683.4 58.8 1695.9 87.2 1712.6 102.9 C1729.2 118.6 1748.4 132.9 1777.6 144.1 C1806.7 155.4 1845.9 162.4 1887.6 170.3 C1929.2 178.1 1979.2 183.5 2027.6 191.3 C2075.9 199.2 2152.6 213.0 2177.6 217.3" stroke-width="1.45" stroke-dasharray="0.1 3.9" stroke-opacity="0.199"/><path d="M1692.4 50.0 C1698.3 58.8 1710.8 87.4 1727.4 103.1 C1744.1 118.7 1763.3 132.8 1792.4 143.9 C1821.6 155.0 1860.8 161.9 1902.4 169.7 C1944.1 177.5 1994.1 182.8 2042.4 190.7 C2090.8 198.5 2167.4 212.3 2192.4 216.7" stroke-width="1.45" stroke-dasharray="0.1 3.9" stroke-opacity="0.200"/><path d="M1707.3 50.0 C1713.2 58.9 1725.7 87.6 1742.3 103.2 C1759.0 118.8 1778.2 132.6 1807.3 143.6 C1836.5 154.6 1875.7 161.4 1917.3 169.2 C1959.0 176.9 2009.0 182.2 2057.3 190.0 C2105.7 197.8 2182.3 211.6 2207.3 216.0" stroke-width="1.45" stroke-dasharray="0.1 3.9" stroke-opacity="0.200"/><path d="M1722.2 50.0 C1728.0 58.9 1740.5 87.8 1757.2 103.3 C1773.9 118.9 1793.0 132.4 1822.2 143.3 C1851.4 154.2 1890.5 160.9 1932.2 168.6 C1973.9 176.3 2023.9 181.5 2072.2 189.3 C2120.5 197.0 2197.2 210.9 2222.2 215.3" stroke-width="1.45" stroke-dasharray="0.1 3.9" stroke-opacity="0.200"/><path d="M1737.1 50.0 C1742.9 58.9 1755.4 88.0 1772.1 103.5 C1788.8 119.0 1807.9 132.3 1837.1 143.0 C1866.3 153.8 1905.4 160.5 1947.1 168.0 C1988.8 175.6 2038.8 180.8 2087.1 188.6 C2135.4 196.3 2212.1 210.2 2237.1 214.6" stroke-width="1.45" stroke-dasharray="0.1 3.9" stroke-opacity="0.200"/><path d="M1752.0 50.0 C1757.8 58.9 1770.3 88.2 1787.0 103.6 C1803.6 119.1 1822.8 132.1 1852.0 142.7 C1881.1 153.4 1920.3 160.0 1962.0 167.5 C2003.6 175.0 2053.6 180.1 2102.0 187.9 C2150.3 195.6 2227.0 209.5 2252.0 213.9" stroke-width="1.45" stroke-dasharray="0.1 3.9" stroke-opacity="0.200"/><path d="M1766.9 50.0 C1772.7 59.0 1785.2 88.4 1801.9 103.8 C1818.5 119.2 1837.7 131.9 1866.9 142.5 C1896.0 153.0 1935.2 159.5 1976.9 166.9 C2018.5 174.4 2068.5 179.5 2116.9 187.2 C2165.2 194.9 2241.9 208.8 2266.9 213.2" stroke-width="1.45" stroke-dasharray="0.1 3.9" stroke-opacity="0.199"/><path d="M1781.7 50.0 C1787.6 59.0 1800.1 88.5 1816.7 103.9 C1833.4 119.3 1852.6 131.8 1881.7 142.2 C1910.9 152.6 1950.1 159.0 1991.7 166.4 C2033.4 173.8 2083.4 178.8 2131.7 186.5 C2180.1 194.1 2256.7 208.1 2281.7 212.5" stroke-width="1.45" stroke-dasharray="0.1 3.9" stroke-opacity="0.198"/><path d="M1796.6 50.0 C1802.5 59.0 1815.0 88.7 1831.6 104.0 C1848.3 119.4 1867.5 131.6 1896.6 141.9 C1925.8 152.2 1965.0 158.5 2006.6 165.8 C2048.3 173.1 2098.3 178.1 2146.6 185.8 C2195.0 193.4 2271.6 207.4 2296.6 211.8" stroke-width="1.45" stroke-dasharray="0.1 3.9" stroke-opacity="0.197"/><path d="M1811.5 50.0 C1817.3 59.0 1829.8 88.9 1846.5 104.2 C1863.2 119.5 1882.3 131.4 1911.5 141.6 C1940.7 151.8 1979.8 158.0 2021.5 165.3 C2063.2 172.5 2113.2 177.4 2161.5 185.1 C2209.8 192.7 2286.5 206.7 2311.5 211.1" stroke-width="1.45" stroke-dasharray="0.1 3.9" stroke-opacity="0.196"/><path d="M1826.4 50.0 C1832.2 59.1 1844.7 89.1 1861.4 104.3 C1878.1 119.6 1897.2 131.3 1926.4 141.3 C1955.6 151.4 1994.7 157.5 2036.4 164.7 C2078.1 171.9 2128.1 176.8 2176.4 184.4 C2224.7 192.0 2301.4 206.0 2326.4 210.4" stroke-width="1.45" stroke-dasharray="0.1 3.9" stroke-opacity="0.195"/><path d="M1841.3 50.0 C1847.1 59.1 1859.6 89.3 1876.3 104.5 C1892.9 119.6 1912.1 131.1 1941.3 141.1 C1970.4 151.0 2009.6 157.0 2051.3 164.1 C2092.9 171.2 2142.9 176.1 2191.3 183.7 C2239.6 191.3 2316.3 205.3 2341.3 209.7" stroke-width="1.45" stroke-dasharray="0.1 3.9" stroke-opacity="0.194"/><path d="M1856.2 50.0 C1862.0 59.1 1874.5 89.5 1891.2 104.6 C1907.8 119.7 1927.0 131.0 1956.2 140.8 C1985.3 150.6 2024.5 156.6 2066.2 163.6 C2107.8 170.6 2157.8 175.4 2206.2 183.0 C2254.5 190.5 2331.2 204.6 2356.2 209.0" stroke-width="1.45" stroke-dasharray="0.1 3.9" stroke-opacity="0.192"/><path d="M1871.0 50.0 C1876.9 59.1 1889.4 89.7 1906.0 104.7 C1922.7 119.8 1941.9 130.8 1971.0 140.5 C2000.2 150.2 2039.4 156.1 2081.0 163.0 C2122.7 170.0 2172.7 174.7 2221.0 182.3 C2269.4 189.8 2346.0 203.9 2371.0 208.3" stroke-width="1.45" stroke-dasharray="0.1 3.9" stroke-opacity="0.190"/><path d="M1885.9 50.0 C1891.8 59.1 1904.3 89.8 1920.9 104.9 C1937.6 119.9 1956.8 130.6 1985.9 140.2 C2015.1 149.8 2054.3 155.6 2095.9 162.5 C2137.6 169.4 2187.6 174.1 2235.9 181.6 C2284.3 189.1 2360.9 203.2 2385.9 207.6" stroke-width="1.45" stroke-dasharray="0.1 3.9" stroke-opacity="0.188"/><path d="M1900.8 50.0 C1906.6 59.2 1919.1 90.0 1935.8 105.0 C1952.5 120.0 1971.6 130.5 2000.8 140.0 C2030.0 149.4 2069.1 155.1 2110.8 161.9 C2152.5 168.7 2202.5 173.4 2250.8 180.9 C2299.1 188.4 2375.8 202.6 2400.8 206.9" stroke-width="1.45" stroke-dasharray="0.1 3.9" stroke-opacity="0.186"/><path d="M1915.7 50.0 C1921.5 59.2 1934.0 90.2 1950.7 105.2 C1967.4 120.1 1986.5 130.3 2015.7 139.7 C2044.9 149.0 2084.0 154.6 2125.7 161.3 C2167.4 168.1 2217.4 172.7 2265.7 180.2 C2314.0 187.7 2390.7 201.9 2415.7 206.2" stroke-width="1.45" stroke-dasharray="0.1 3.9" stroke-opacity="0.183"/><path d="M1930.6 50.0 C1936.4 59.2 1948.9 90.4 1965.6 105.3 C1982.2 120.2 2001.4 130.1 2030.6 139.4 C2059.7 148.6 2098.9 154.1 2140.6 160.8 C2182.2 167.5 2232.2 172.0 2280.6 179.5 C2328.9 186.9 2405.6 201.2 2430.6 205.5" stroke-width="1.45" stroke-dasharray="0.1 3.9" stroke-opacity="0.181"/><path d="M1945.5 50.0 C1951.3 59.2 1963.8 90.6 1980.5 105.4 C1997.1 120.3 2016.3 130.0 2045.5 139.1 C2074.6 148.2 2113.8 153.6 2155.5 160.2 C2197.1 166.8 2247.1 171.4 2295.5 178.8 C2343.8 186.2 2420.5 200.5 2445.5 204.8" stroke-width="1.45" stroke-dasharray="0.1 3.9" stroke-opacity="0.178"/><path d="M1960.3 50.0 C1966.2 59.3 1978.7 90.8 1995.3 105.6 C2012.0 120.4 2031.2 129.8 2060.3 138.8 C2089.5 147.9 2128.7 153.1 2170.3 159.7 C2212.0 166.2 2262.0 170.7 2310.3 178.1 C2358.7 185.5 2435.3 199.8 2460.3 204.1" stroke-width="1.45" stroke-dasharray="0.1 3.9" stroke-opacity="0.176"/><path d="M1975.2 50.0 C1981.1 59.3 1993.6 91.0 2010.2 105.7 C2026.9 120.5 2046.1 129.7 2075.2 138.6 C2104.4 147.5 2143.6 152.6 2185.2 159.1 C2226.9 165.6 2276.9 170.0 2325.2 177.4 C2373.6 184.8 2450.2 199.1 2475.2 203.4" stroke-width="1.45" stroke-dasharray="0.1 3.9" stroke-opacity="0.173"/><path d="M1990.1 50.0 C1995.9 59.3 2008.4 91.1 2025.1 105.9 C2041.8 120.6 2060.9 129.5 2090.1 138.3 C2119.3 147.1 2158.4 152.2 2200.1 158.6 C2241.8 165.0 2291.8 169.3 2340.1 176.7 C2388.4 184.1 2465.1 198.4 2490.1 202.7" stroke-width="1.45" stroke-dasharray="0.1 3.9" stroke-opacity="0.170"/><path d="M2005.0 50.0 C2010.8 59.3 2023.3 91.3 2040.0 106.0 C2056.7 120.7 2075.8 129.3 2105.0 138.0 C2134.2 146.7 2173.3 151.7 2215.0 158.0 C2256.7 164.3 2306.7 168.7 2355.0 176.0 C2403.3 183.3 2480.0 197.7 2505.0 202.0" stroke-width="1.45" stroke-dasharray="0.1 3.9" stroke-opacity="0.167"/><path d="M1425.0 98.0 C1432.5 101.3 1454.7 111.2 1470.0 118.0 C1485.3 124.8 1496.3 130.3 1517.0 138.5 C1537.7 146.7 1568.3 160.9 1594.0 167.0 C1619.7 173.1 1645.3 173.2 1671.0 175.0 C1696.7 176.8 1722.2 175.0 1748.0 178.0 C1773.8 181.0 1794.8 187.3 1826.0 193.0 C1857.2 198.7 1916.8 208.8 1935.0 212.0" stroke="url(#rg2)" stroke-width="1.4" stroke-dasharray="0.1 2.5" stroke-opacity="0.420"/><path d="M1423.0 98.3 C1430.8 101.8 1454.3 112.0 1470.0 119.0 C1485.7 126.0 1496.3 131.9 1517.0 140.2 C1537.7 148.5 1568.3 162.6 1594.0 168.7 C1619.7 174.8 1645.3 174.9 1671.0 176.7 C1696.7 178.5 1722.2 176.7 1748.0 179.7 C1773.8 182.7 1794.8 189.0 1826.0 194.7 C1857.2 200.4 1916.8 210.5 1935.0 213.7" stroke="url(#rg2)" stroke-width="1.4" stroke-dasharray="0.1 2.5" stroke-opacity="0.365"/><path d="M1421.0 98.7 C1429.2 102.2 1454.0 112.8 1470.0 120.0 C1486.0 127.2 1496.3 133.5 1517.0 141.9 C1537.7 150.3 1568.3 164.3 1594.0 170.4 C1619.7 176.5 1645.3 176.6 1671.0 178.4 C1696.7 180.2 1722.2 178.4 1748.0 181.4 C1773.8 184.4 1794.8 190.7 1826.0 196.4 C1857.2 202.1 1916.8 212.2 1935.0 215.4" stroke="url(#rg2)" stroke-width="1.4" stroke-dasharray="0.1 2.5" stroke-opacity="0.310"/><path d="M1419.0 99.0 C1427.5 102.7 1453.7 113.6 1470.0 121.1 C1486.3 128.5 1496.3 135.1 1517.0 143.6 C1537.7 152.1 1568.3 166.0 1594.0 172.1 C1619.7 178.2 1645.3 178.3 1671.0 180.1 C1696.7 181.9 1722.2 180.1 1748.0 183.1 C1773.8 186.1 1794.8 192.4 1826.0 198.1 C1857.2 203.8 1916.8 213.9 1935.0 217.1" stroke="url(#rg2)" stroke-width="1.4" stroke-dasharray="0.1 2.5" stroke-opacity="0.255"/><path d="M1417.0 99.4 C1425.8 103.1 1453.3 114.4 1470.0 122.1 C1486.7 129.7 1496.3 136.7 1517.0 145.3 C1537.7 153.9 1568.3 167.7 1594.0 173.8 C1619.7 179.9 1645.3 180.0 1671.0 181.8 C1696.7 183.6 1722.2 181.8 1748.0 184.8 C1773.8 187.8 1794.8 194.1 1826.0 199.8 C1857.2 205.5 1916.8 215.6 1935.0 218.8" stroke="url(#rg2)" stroke-width="1.4" stroke-dasharray="0.1 2.5" stroke-opacity="0.200"/><path d="M1415.0 99.7 C1424.2 103.6 1453.0 115.2 1470.0 123.1 C1487.0 131.0 1496.3 138.3 1517.0 147.0 C1537.7 155.7 1568.3 169.4 1594.0 175.5 C1619.7 181.6 1645.3 181.7 1671.0 183.5 C1696.7 185.3 1722.2 183.5 1748.0 186.5 C1773.8 189.5 1794.8 195.8 1826.0 201.5 C1857.2 207.2 1916.8 217.3 1935.0 220.5" stroke="url(#rg2)" stroke-width="1.4" stroke-dasharray="0.1 2.5" stroke-opacity="0.145"/><path d="M1413.0 100.0 C1422.5 104.1 1452.7 116.0 1470.0 124.1 C1487.3 132.2 1496.3 139.9 1517.0 148.7 C1537.7 157.5 1568.3 171.1 1594.0 177.2 C1619.7 183.3 1645.3 183.4 1671.0 185.2 C1696.7 187.0 1722.2 185.2 1748.0 188.2 C1773.8 191.2 1794.8 197.5 1826.0 203.2 C1857.2 208.9 1916.8 219.0 1935.0 222.2" stroke="url(#rg2)" stroke-width="1.4" stroke-dasharray="0.1 2.5" stroke-opacity="0.090"/><path d="M1300.0 182.0 C1308.3 182.7 1333.3 184.0 1350.0 186.0 C1366.7 188.0 1378.3 189.7 1400.0 194.0 C1421.7 198.3 1466.7 209.0 1480.0 212.0" stroke="url(#rg3)" stroke-width="1.3" stroke-dasharray="0.1 2.6" stroke-opacity="0.160"/><path d="M1300.0 184.0 C1308.3 184.7 1333.3 186.0 1350.0 188.0 C1366.7 190.0 1378.3 191.7 1400.0 196.0 C1421.7 200.3 1466.7 211.0 1480.0 214.0" stroke="url(#rg3)" stroke-width="1.3" stroke-dasharray="0.1 2.6" stroke-opacity="0.130"/><path d="M1300.0 186.0 C1308.3 186.7 1333.3 188.0 1350.0 190.0 C1366.7 192.0 1378.3 193.7 1400.0 198.0 C1421.7 202.3 1466.7 213.0 1480.0 216.0" stroke="url(#rg3)" stroke-width="1.3" stroke-dasharray="0.1 2.6" stroke-opacity="0.100"/><path d="M1300.0 188.0 C1308.3 188.7 1333.3 190.0 1350.0 192.0 C1366.7 194.0 1378.3 195.7 1400.0 200.0 C1421.7 204.3 1466.7 215.0 1480.0 218.0" stroke="url(#rg3)" stroke-width="1.3" stroke-dasharray="0.1 2.6" stroke-opacity="0.070"/></g></svg></div>
<div id="crumbs"></div>
<div id="cmdbar"></div>
<div id="content"></div>
<div id="txt">
<!-- suite -->
<svg width="1938" height="64" style="left:0;top:0" fill="#fff"><circle cx="22.6" cy="22.3" r="2.4"/><circle cx="30.9" cy="22.3" r="2.4"/><circle cx="39.2" cy="22.3" r="2.4"/><circle cx="22.6" cy="30.6" r="2.4"/><circle cx="30.9" cy="30.6" r="2.4"/><circle cx="39.2" cy="30.6" r="2.4"/><circle cx="22.6" cy="38.9" r="2.4"/><circle cx="30.9" cy="38.9" r="2.4"/><circle cx="39.2" cy="38.9" r="2.4"/></svg>
<span class="t sb3" style="left:73.8px;top:22.8px;font-size:21.3px;color:#fff;letter-spacing:0.242px;">SharePoint</span>
<div class="abs" style="left:590px;top:10px;width:632px;height:43px;background:#fafafa;border-radius:5px"></div>
<svg style="left:0;top:0" width="1938" height="64" fill="none" stroke="#424242" stroke-width="1.35" stroke-linecap="round"><circle cx="629.1" cy="29.3" r="6.4"/><path d="M624.5 34 L615.7 42.8"/></svg>
<span class="t" style="left:654.9px;top:23.9px;font-size:18.67px;color:#5f5f5f;letter-spacing:-0.389px;">Search across sites</span>
<!-- left nav -->

<!-- header -->
<span class="t" style="left:242.4px;top:88.1px;font-size:37.3px;color:#fff;letter-spacing:-0.058px;">Meeting Place</span>
<span class="t" style="left:239.1px;top:159.6px;font-size:18.67px;color:#fff;letter-spacing:0.459px;">Home</span>
<span class="t" style="left:327.5px;top:158.5px;font-size:18.67px;color:#fff;letter-spacing:-0.195px;">Knowledge Base</span>
<div class="abs" style="left:328px;top:186.5px;width:136px;height:2.6px;background:#fff"></div>
<span class="t" style="left:501.2px;top:159.6px;font-size:18.67px;color:#fff;letter-spacing:0.245px;">Information Security</span>
<span class="t" style="left:734.2px;top:159.6px;font-size:18.67px;color:#fff;letter-spacing:0.161px;">Edit</span>
<span class="t" style="left:1704.4px;top:120.9px;font-size:18.67px;color:#fff;letter-spacing:0.188px;">Following</span>
<span class="t" style="left:1848.8px;top:120.9px;font-size:18.67px;color:#fff;letter-spacing:-0.399px;">Share</span>
<!-- breadcrumbs -->
<span class="t" style="left:84.2px;top:229.2px;font-size:19px;color:#fff;letter-spacing:-0.289px;">Sprocket Web Parts</span>
<span class="t" style="left:255.8px;top:229.2px;font-size:19px;color:#fff;">/</span>
<span class="t" style="left:270.0px;top:229.2px;font-size:19px;color:#fff;letter-spacing:-0.160px;">People Hub</span>
<span class="t" style="left:1397.1px;top:229.9px;font-size:18.2px;font-weight:700;color:#fff;letter-spacing:0.564px;">Info</span>
<span class="t" style="left:1477.5px;top:229.9px;font-size:18.2px;font-weight:700;color:#fff;letter-spacing:-0.114px;">Table of Contents</span>
<span class="t" style="left:1672.9px;top:229.9px;font-size:18.2px;font-weight:700;color:#fff;letter-spacing:-0.209px;">Read List Admin</span>
<span class="t" style="left:1858.0px;top:229.9px;font-size:18.2px;font-weight:700;color:#fff;letter-spacing:-0.486px;">Read List</span>
<!-- command bar -->
<span class="t" style="left:146.8px;top:287.9px;font-size:18.67px;color:#333;letter-spacing:0.391px;">New</span>
<span class="t" style="left:287.0px;top:287.9px;font-size:18.67px;color:#333;letter-spacing:0.326px;">Promote</span>
<span class="t" style="left:429.2px;top:287.9px;font-size:18.67px;color:#333;letter-spacing:-0.199px;">Page details</span>
<span class="t" style="left:593.6px;top:287.9px;font-size:18.67px;color:#333;letter-spacing:-0.166px;">Preview</span>
<span class="t" style="left:727.7px;top:287.9px;font-size:18.67px;color:#333;letter-spacing:0.005px;">Analytics</span>
<span class="t" style="left:1406.1px;top:287.9px;font-size:18.67px;color:#333;letter-spacing:0.214px;">Published 11/24/2025</span>
<span class="t" style="left:1653.6px;top:287.9px;font-size:18.67px;color:#333;letter-spacing:-0.479px;">Share</span>
<span class="t" style="left:1803.1px;top:287.9px;font-size:18.67px;color:#333;letter-spacing:-0.014px;">Edit</span>
<!-- content -->
<span class="t sb2" style="left:177.7px;top:337.7px;font-size:26.67px;color:#1b1b1b;letter-spacing:0.249px;">People Hub</span>
<span class="t sb" style="left:229.0px;top:406.8px;font-size:18.67px;color:#242424;letter-spacing:0.573px;">Directory</span>
<div class="abs" style="left:194px;top:441px;width:114px;height:3.6px;background:#2a5db0;border-radius:2px"></div>
<span class="t sb" style="left:375.6px;top:406.8px;font-size:18.67px;color:#424242;letter-spacing:0.262px;">Org Browser</span>
<span class="t sb" style="left:549.2px;top:406.8px;font-size:18.67px;color:#424242;letter-spacing:0.488px;">Org Chart</span>
<div class="abs" style="left:178px;top:466px;width:1625px;height:76px;background:#fff;border-radius:6px;box-shadow:0 0 2px rgba(0,0,0,.14),0 3px 6px rgba(0,0,0,.13)"></div>
<div class="abs" style="left:194px;top:482px;width:974px;height:44px;background:#fff;border:1.3px solid #d1d1d1;border-bottom-color:#616161;border-radius:5px"></div>
<span class="t" style="left:240.1px;top:494.9px;font-size:18.67px;color:#707070;letter-spacing:-0.421px;">Search</span>
<span class="t sb" style="left:1235.9px;top:495.2px;font-size:18.67px;color:#242424;letter-spacing:0.114px;">Export to CSV</span>
<span class="t sb" style="left:1423.7px;top:495.2px;font-size:18.67px;color:#242424;letter-spacing:0.258px;">Copy Emails to Clipboard</span>
<span class="t sb" style="left:1717.8px;top:495.2px;font-size:18.67px;color:#242424;letter-spacing:0.522px;">Filter</span>
<span class="t sb" style="left:279.9px;top:589.5px;font-size:18.67px;color:#242424;letter-spacing:0.534px;">Name</span>
<span class="t sb" style="left:595.9px;top:589.5px;font-size:18.67px;color:#242424;letter-spacing:0.667px;">Title</span>
<span class="t sb" style="left:825.4px;top:589.5px;font-size:18.67px;color:#242424;letter-spacing:0.712px;">Department</span>
<span class="t sb" style="left:1054.8px;top:589.5px;font-size:18.67px;color:#242424;letter-spacing:0.602px;">Office</span>
<span class="t sb" style="left:1284.4px;top:589.5px;font-size:18.67px;color:#242424;letter-spacing:-0.171px;">Teams</span>
<span class="t sb" style="left:1397.5px;top:589.5px;font-size:18.67px;color:#242424;letter-spacing:-0.110px;">Business Phone</span>
<span class="t sb" style="left:1627.0px;top:589.5px;font-size:18.67px;color:#242424;letter-spacing:0.509px;">Mobile Phone</span>
<div class="abs" style="left:178px;top:628px;width:1602px;height:1px;background:#e8e8e8"></div>
<span class="t" style="left:279.9px;top:661.0px;font-size:18.67px;color:#424242;letter-spacing:-0.175px;">Patti Fernandez</span>
<span class="t" style="left:595.9px;top:661.0px;font-size:18.67px;color:#424242;letter-spacing:-0.081px;">President</span>
<span class="t" style="left:825.4px;top:661.0px;font-size:18.67px;color:#424242;letter-spacing:-0.028px;">Executive Management</span>
<span class="t" style="left:1054.8px;top:661.0px;font-size:18.67px;color:#424242;letter-spacing:0.377px;">15/1102</span>
<span class="t" style="left:1397.5px;top:661.0px;font-size:18.67px;color:#424242;letter-spacing:0.048px;text-decoration:underline;text-decoration-thickness:1.3px;text-underline-offset:1.6px;">+1 502 555 0144</span>
<div class="abs" style="left:178px;top:707px;width:1602px;height:1px;background:#eaeaea"></div>
<span class="t" style="left:279.9px;top:740.0px;font-size:18.67px;color:#424242;letter-spacing:-0.138px;">Adele Vance</span>
<span class="t" style="left:595.9px;top:740.0px;font-size:18.67px;color:#424242;letter-spacing:-0.044px;">Retail Manager</span>
<span class="t" style="left:825.4px;top:740.0px;font-size:18.67px;color:#424242;letter-spacing:-0.217px;">Retail</span>
<span class="t" style="left:1054.8px;top:740.0px;font-size:18.67px;color:#424242;letter-spacing:0.475px;">18/2111</span>
<span class="t" style="left:1397.5px;top:740.0px;font-size:18.67px;color:#424242;letter-spacing:0.048px;text-decoration:underline;text-decoration-thickness:1.3px;text-underline-offset:1.6px;">+1 425 555 0109</span>
<div class="abs" style="left:178px;top:787px;width:1602px;height:1px;background:#eaeaea"></div>
<span class="t" style="left:279.9px;top:819.0px;font-size:18.67px;color:#424242;letter-spacing:0.141px;">Alex Wilber</span>
<span class="t" style="left:595.9px;top:819.0px;font-size:18.67px;color:#424242;letter-spacing:0.165px;">Marketing Assistant</span>
<span class="t" style="left:825.4px;top:819.0px;font-size:18.67px;color:#424242;letter-spacing:0.442px;">Marketing</span>
<span class="t" style="left:1054.8px;top:819.0px;font-size:18.67px;color:#424242;letter-spacing:0.383px;">131/1104</span>
<span class="t" style="left:1397.5px;top:819.0px;font-size:18.67px;color:#424242;letter-spacing:0.140px;text-decoration:underline;text-decoration-thickness:1.3px;text-underline-offset:1.6px;">+1 858 555 0110</span>
<div class="abs" style="left:178px;top:866px;width:1602px;height:1px;background:#eaeaea"></div>
<span class="t" style="left:279.9px;top:899.0px;font-size:18.67px;color:#424242;letter-spacing:-0.049px;">Demo User</span>
<span class="t" style="left:595.9px;top:899.0px;font-size:18.67px;color:#424242;letter-spacing:0.015px;">Line Worker</span>
<span class="t" style="left:825.4px;top:899.0px;font-size:18.67px;color:#424242;letter-spacing:0.201px;">Technology</span>
<div class="abs" style="left:178px;top:945px;width:1602px;height:1px;background:#eaeaea"></div>
<span class="t" style="left:279.9px;top:978.0px;font-size:18.67px;color:#424242;letter-spacing:0.047px;">Diego Siciliani</span>
<span class="t" style="left:595.9px;top:978.0px;font-size:18.67px;color:#424242;letter-spacing:-0.037px;">HR Manager</span>
<span class="t" style="left:825.4px;top:978.0px;font-size:18.67px;color:#424242;letter-spacing:-0.527px;">HR</span>
<span class="t" style="left:1054.8px;top:978.0px;font-size:18.67px;color:#424242;letter-spacing:0.420px;">14/1108</span>
<span class="t" style="left:1397.5px;top:978.0px;font-size:18.67px;color:#424242;letter-spacing:0.048px;text-decoration:underline;text-decoration-thickness:1.3px;text-underline-offset:1.6px;">+1 205 555 0108</span>
<div class="abs" style="left:178px;top:1025px;width:1602px;height:1px;background:#eaeaea"></div>
<span class="t" style="left:279.9px;top:1057.0px;font-size:18.67px;color:#424242;letter-spacing:0.005px;">Grady Archie</span>
<span class="t" style="left:595.9px;top:1057.0px;font-size:18.67px;color:#424242;letter-spacing:0.029px;">Designer</span>
<span class="t" style="left:825.4px;top:1057.0px;font-size:18.67px;color:#424242;letter-spacing:0.336px;">R&amp;D</span>
<span class="t" style="left:1054.8px;top:1057.0px;font-size:18.67px;color:#424242;letter-spacing:0.221px;">19/2109</span>
<span class="t" style="left:1397.5px;top:1057.0px;font-size:18.67px;color:#424242;letter-spacing:0.048px;text-decoration:underline;text-decoration-thickness:1.3px;text-underline-offset:1.6px;">+1 309 555 0104</span>
<div class="abs" style="left:178px;top:1104px;width:1602px;height:1px;background:#eaeaea"></div>
<span class="t" style="left:279.9px;top:1136.0px;font-size:18.67px;color:#424242;letter-spacing:0.285px;">Henrietta Mueller</span>
<span class="t" style="left:595.9px;top:1136.0px;font-size:18.67px;color:#424242;letter-spacing:0.095px;">Developer</span>
<span class="t" style="left:825.4px;top:1136.0px;font-size:18.67px;color:#424242;letter-spacing:0.336px;">R&amp;D</span>
<span class="t" style="left:1054.8px;top:1136.0px;font-size:18.67px;color:#424242;letter-spacing:0.420px;">18/1106</span>
<span class="t" style="left:1397.5px;top:1136.0px;font-size:18.67px;color:#424242;letter-spacing:0.140px;text-decoration:underline;text-decoration-thickness:1.3px;text-underline-offset:1.6px;">+1 954 555 0118</span>
<div class="abs" style="left:178px;top:1183px;width:1602px;height:1px;background:#eaeaea"></div>
<span class="t" style="left:279.9px;top:1216.0px;font-size:18.67px;color:#424242;letter-spacing:-0.243px;">Isaiah Langer</span>
<span class="t" style="left:595.9px;top:1216.0px;font-size:18.67px;color:#424242;letter-spacing:-0.686px;">Sales Rep</span>
<span class="t" style="left:825.4px;top:1216.0px;font-size:18.67px;color:#424242;letter-spacing:-0.854px;">Sales</span>
<span class="t" style="left:1054.8px;top:1216.0px;font-size:18.67px;color:#424242;letter-spacing:0.277px;">20/1101</span>
<span class="t" style="left:1397.5px;top:1216.0px;font-size:18.67px;color:#424242;letter-spacing:0.048px;text-decoration:underline;text-decoration-thickness:1.3px;text-underline-offset:1.6px;">+1 918 555 0101</span>
<div class="abs" style="left:178px;top:1262px;width:1602px;height:1px;background:#eaeaea"></div>
<span class="t" style="left:279.9px;top:1295.0px;font-size:18.67px;color:#424242;letter-spacing:-0.208px;">Johanna Lorenz</span>
<span class="t" style="left:595.9px;top:1295.0px;font-size:18.67px;color:#424242;letter-spacing:-0.126px;">Senior Engineer</span>
<span class="t" style="left:825.4px;top:1295.0px;font-size:18.67px;color:#424242;letter-spacing:0.075px;">Engineering</span>
<span class="t" style="left:1054.8px;top:1295.0px;font-size:18.67px;color:#424242;letter-spacing:0.150px;">23/2102</span>
<span class="t" style="left:1397.5px;top:1295.0px;font-size:18.67px;color:#424242;letter-spacing:0.048px;text-decoration:underline;text-decoration-thickness:1.3px;text-underline-offset:1.6px;">+1 502 555 0102</span>
</div>
<!-- icons -->
<svg width="1938" height="1338" style="left:0;top:0"><path d="M1638.20 27.81 L1658.70 21.90 Q1659.90 21.70 1659.90 22.90 L1659.90 39.22 Q1659.90 40.62 1658.60 40.32 L1638.20 34.53 Q1637.20 34.23 1637.20 33.33 L1637.20 29.01 Q1637.20 28.11 1638.20 27.81Z" fill="none" stroke="#fff" stroke-width="1.8" stroke-linejoin="round"/><path d="M1642.19 35.73 A4.09 3.57 0 0 0 1650.37 37.89" fill="none" stroke="#fff" stroke-width="1.8" stroke-linecap="round"/><g fill="none" stroke="#fff" stroke-width="1.8" stroke-linejoin="round"><circle cx="1709.4" cy="27.9" r="3.4"/><path d="M1702.7 35 H1716.3 Q1716.6 41.6 1709.5 41.6 Q1702.4 41.6 1702.7 35Z"/><path d="M1716 20.4 H1723.6 Q1724.6 20.4 1724.6 21.4 V26 Q1724.6 27 1723.6 27 H1718.6 L1715.8 29.6 V27 Q1715 27 1715 26 V21.4 Q1715 20.4 1716 20.4Z"/></g><path d="M1776.21 23.19 L1776.61 20.45 L1780.19 20.45 L1780.59 23.19 L1782.51 23.99 L1784.74 22.33 L1787.27 24.86 L1785.61 27.09 L1786.41 29.01 L1789.15 29.41 L1789.15 32.99 L1786.41 33.39 L1785.61 35.31 L1787.27 37.54 L1784.74 40.07 L1782.51 38.41 L1780.59 39.21 L1780.19 41.95 L1776.61 41.95 L1776.21 39.21 L1774.29 38.41 L1772.06 40.07 L1769.53 37.54 L1771.19 35.31 L1770.39 33.39 L1767.65 32.99 L1767.65 29.41 L1770.39 29.01 L1771.19 27.09 L1769.53 24.86 L1772.06 22.33 L1774.29 23.99Z" fill="none" stroke="#fff" stroke-width="1.8" stroke-linejoin="round"/><circle cx="1778.4" cy="31.2" r="3.5" fill="none" stroke="#fff" stroke-width="1.8"/><path d="M1836.9 26 Q1836.9 20.8 1842.6 20.8 Q1848.2 20.8 1848.2 25.6 Q1848.2 28.6 1845 30.8 Q1842.6 32.6 1842.6 36.4" fill="none" stroke="#fff" stroke-width="1.6" stroke-linecap="round"/><circle cx="1842.6" cy="40.6" r="1.1" fill="#fff"/><g fill="none" stroke="#605e5c" stroke-width="1.7" stroke-linejoin="round" stroke-linecap="round"><path d="M21 96.6 L30.5 87.6 L40 96.6 V106 Q40 107.6 38.4 107.6 H34.6 V101 Q34.6 99.2 32.8 99.2 H28.2 Q26.4 99.2 26.4 101 V107.6 H22.6 Q21 107.6 21 106Z"/><circle cx="30.5" cy="164.2" r="10.6"/><ellipse cx="30.5" cy="164.2" rx="4.6" ry="10.6"/><path d="M20.6 160.4 H40.4 M20.6 168 H40.4"/><rect x="19.6" y="221.5" width="18.6" height="16.4" rx="2.6"/><path d="M38.2 225.4 H38.6 Q41 225.4 41 227.8 V235 Q41 237.9 38.2 237.9 H36"/><path d="M23.4 226.4 H34.4 M30.8 230.6 H34.4 M30.8 233.8 H34.4"/><rect x="23.4" y="230.2" width="3.8" height="3.8" stroke-width="1.5"/><path d="M25 286.2 H32 L38.2 292.4 V304.8 Q38.2 307.4 35.6 307.4 H25 Q22.6 307.4 22.6 304.8 V288.6 Q22.6 286.2 25 286.2Z M31.6 286.4 V290.4 Q31.6 292.6 33.8 292.6 H38"/><path d="M25 353.4 H39 Q41 353.4 41 355.4 V369 L37 372.9 H23.6 Q21.6 372.9 21.6 370.9 V356.8Z M21.6 359.8 H41 M21.6 364.2 H41 M21.6 368.6 H41 M26 357 V372.9"/><path d="M26.5 424 V422.8 Q26.5 418.8 30.4 418.8 H37 Q41.4 418.8 41.4 423.2 V430.6 Q41.4 435.3 36.7 435.3 H29 Q26.3 435.3 26.3 432.6 Q26.3 429.9 29 429.9 H33 Q36.1 429.9 36.1 427.1 Q36.1 424.3 33 424.3 H25.4 Q21.1 424.3 21.1 428.6 V435 Q21.1 439.5 25.5 439.5 H31.3 Q35.2 439.5 35.6 435.6"/><circle cx="30.5" cy="497.6" r="10.5"/><path d="M25.4 497.6 H35.6 M30.5 492.5 V502.7"/></g><rect x="4.2" y="463" width="52.8" height="1" fill="#e1dfdd"/><g fill="#fff" stroke="#fff" stroke-width="2.4" stroke-linejoin="round"><path d="M120.6 119.6 L135.2 123.6 L123.4 169 L109 164.8Z"/><path d="M146.6 119.6 L161.2 123.6 L149.8 169 L135.4 164.8Z"/><path d="M161.6 164.8 L175.8 169 L179.6 151.6 L171.6 139.4 L167.8 142.8Z"/></g><g stroke-width="1.6" stroke-linejoin="round"><path d="M176 105 L183.6 106.6 L185.2 110.6 L179.8 114 L175.2 110Z" fill="#4a7de0" stroke="#4a7de0"/><path d="M181.4 116.2 L187.6 113.8 L190 118.4 L187.6 126 L183.4 126.4 L180 120.6Z" fill="#a7a5ee" stroke="#a7a5ee"/><path d="M171 124.6 L177 120.6 L180.8 127.4 L176.4 132.6 L172 131Z" fill="#5ad0e6" stroke="#5ad0e6"/><path d="M176.4 135.6 L183 132.8 L185.2 135.4 L182 145.4 L176.6 138.6Z" fill="#9bbcf6" stroke="#9bbcf6"/></g><path d="M682.4 163.6 L688.7 170 L695 163.6" fill="none" stroke="#fff" stroke-width="1.6" stroke-linecap="round" stroke-linejoin="round"/><path d="M1684.40 120.00 L1687.10 125.88 L1693.53 126.63 L1688.77 131.02 L1690.04 137.37 L1684.40 134.20 L1678.76 137.37 L1680.03 131.02 L1675.27 126.63 L1681.70 125.88Z" fill="#fff" stroke="#fff" stroke-width="1.8" stroke-linejoin="round"/><path d="M1827.79 122.50 L1823.00 122.50 Q1820.40 122.50 1820.40 125.10 L1820.40 133.80 Q1820.40 136.40 1823.00 136.40 L1832.60 136.40 Q1835.20 136.40 1835.20 133.80 L1835.20 132.86" fill="none" stroke="#fff" stroke-width="1.6" stroke-linecap="round"/><path d="M1824.27 133.18 Q1825.68 129.48 1830.96 129.64 L1830.96 133.34 L1838.00 126.90 L1830.96 120.30 L1830.96 123.84 Q1824.62 124.97 1824.27 133.18Z" fill="none" stroke="#fff" stroke-width="1.6" stroke-linejoin="round"/><circle cx="1375.5" cy="237.4" r="8.6" fill="none" stroke="#fff" stroke-width="1.4"/><path d="M1375.5 236 V241.6" stroke="#fff" stroke-width="1.6" stroke-linecap="round"/><circle cx="1375.5" cy="233.2" r="1" fill="#fff"/><g fill="none" stroke="#fff" stroke-width="1.4"><rect x="1447.2" y="230" width="6" height="6"/><rect x="1447.2" y="239.4" width="6" height="6"/><path d="M1456.4 231 H1465.8 M1456.4 235 H1462.6 M1456.4 240.4 H1465.8 M1456.4 244.4 H1462.6" stroke-linecap="round"/></g><path d="M1649.15 230.95 L1649.49 228.62 L1652.51 228.62 L1652.85 230.95 L1654.47 231.62 L1656.35 230.21 L1658.49 232.35 L1657.08 234.23 L1657.75 235.85 L1660.08 236.19 L1660.08 239.21 L1657.75 239.55 L1657.08 241.17 L1658.49 243.05 L1656.35 245.19 L1654.47 243.78 L1652.85 244.45 L1652.51 246.78 L1649.49 246.78 L1649.15 244.45 L1647.53 243.78 L1645.65 245.19 L1643.51 243.05 L1644.92 241.17 L1644.25 239.55 L1641.92 239.21 L1641.92 236.19 L1644.25 235.85 L1644.92 234.23 L1643.51 232.35 L1645.65 230.21 L1647.53 231.62Z" fill="none" stroke="#fff" stroke-width="1.4" stroke-linejoin="round"/><circle cx="1651" cy="237.7" r="3" fill="none" stroke="#fff" stroke-width="1.4"/><g fill="none" stroke="#fff" stroke-width="1.5" stroke-linecap="round" stroke-linejoin="round"><path d="M1835.4 232.4 H1846.2 M1835.4 237.8 H1846.2 M1835.4 243.2 H1846.2"/><path d="M1827 237.6 L1828.8 239.4 L1832 235.8 M1827 243 L1828.8 244.8 L1832 241.2"/></g><circle cx="1829.4" cy="228.4" r="6.6" fill="#e6271a"/><path d="M116.2 296.3 H134.2 M125.2 287.3 V305.3" stroke="#333" stroke-width="1.35" fill="none"/><path d="M201.2 295.3 L206.1 300.5 L211 295.3" fill="none" stroke="#333" stroke-width="1.2" stroke-linecap="round" stroke-linejoin="round"/><path d="M255.90 294.08 L275.80 288.60 Q277.00 288.40 277.00 289.60 L277.00 304.63 Q277.00 306.03 275.70 305.73 L255.90 300.35 Q254.90 300.05 254.90 299.15 L254.90 295.28 Q254.90 294.38 255.90 294.08Z" fill="none" stroke="#333" stroke-width="1.35" stroke-linejoin="round"/><path d="M259.76 301.55 A3.98 3.33 0 0 0 267.72 303.48" fill="none" stroke="#333" stroke-width="1.35" stroke-linecap="round"/><path d="M405.69 289.28 L406.09 286.74 L409.51 286.74 L409.91 289.28 L411.76 290.05 L413.85 288.54 L416.26 290.95 L414.75 293.04 L415.52 294.89 L418.06 295.29 L418.06 298.71 L415.52 299.11 L414.75 300.96 L416.26 303.05 L413.85 305.46 L411.76 303.95 L409.91 304.72 L409.51 307.26 L406.09 307.26 L405.69 304.72 L403.84 303.95 L401.75 305.46 L399.34 303.05 L400.85 300.96 L400.08 299.11 L397.54 298.71 L397.54 295.29 L400.08 294.89 L400.85 293.04 L399.34 290.95 L401.75 288.54 L403.84 290.05Z" fill="none" stroke="#333" stroke-width="1.35" stroke-linejoin="round"/><circle cx="407.8" cy="297" r="3.3" fill="none" stroke="#333" stroke-width="1.35"/><g fill="none" stroke="#333" stroke-width="1.35" stroke-linejoin="round" stroke-linecap="round"><path d="M567.6 293.6 V290 Q567.6 288 569.6 288 H582.6 Q584.6 288 584.6 290 V299 Q584.6 301 582.6 301 H573.4 M578.6 301 V305.2 M574 305.2 H581"/><rect x="564.4" y="296" width="6.6" height="11.2" rx="1.6"/><path d="M567.2 304.4 H568.2"/></g><g fill="none" stroke="#333" stroke-width="1.35"><rect x="696.6" y="288.2" width="20.8" height="16.4"/><path d="M696.6 291.4 H717.4" stroke-width="1.6"/><path d="M700.2 301.8 V294.8 M702.9 301.8 V298.6 M705.6 301.8 V296.2 M708.3 301.8 V297.8 M711 301.8 V295 M713.7 301.8 V296.8" stroke-width="1.3"/></g><path d="M1631.48 289.80 L1625.60 289.80 Q1623.00 289.80 1623.00 292.40 L1623.00 303.40 Q1623.00 306.00 1625.60 306.00 L1637.80 306.00 Q1640.40 306.00 1640.40 303.40 L1640.40 301.95" fill="none" stroke="#333" stroke-width="1.35" stroke-linecap="round"/><path d="M1627.44 302.32 Q1629.06 298.09 1635.12 298.27 L1635.12 302.50 L1643.20 295.14 L1635.12 287.60 L1635.12 291.65 Q1627.85 292.94 1627.44 302.32Z" fill="none" stroke="#333" stroke-width="1.35" stroke-linejoin="round"/><path d="M1717.2 295 L1722.1 300.3 L1727 295" fill="none" stroke="#333" stroke-width="1.2" stroke-linecap="round" stroke-linejoin="round"/><g fill="none" stroke="#333" stroke-width="1.35" stroke-linejoin="round"><path d="M1772 307 L1773.6 300.8 L1786.8 287.4 Q1788.8 285.6 1791 287.6 Q1793 289.8 1791.2 291.8 L1778 305.2Z M1784.6 289.8 L1788.8 294"/></g><path d="M1874.6 306 L1892.6 288 M1884.4 287.8 H1892.8 V296.2 M1874.4 297.8 V306.2 H1882.8" fill="none" stroke="#333" stroke-width="1.4"/><g stroke="#2a5db0" stroke-width="1.7" stroke-linecap="round"><path d="M201.6 407.3 H215 M201.6 414.3 H215 M201.6 421.2 H215"/></g><g fill="#2a5db0"><circle cx="195.6" cy="407.3" r="1.4"/><circle cx="195.6" cy="414.3" r="1.4"/><circle cx="195.6" cy="421.2" r="1.4"/></g><g fill="none" stroke="#424242" stroke-width="1.35"><circle cx="351.6" cy="408.5" r="3.6"/><circle cx="345.40000000000003" cy="421.6" r="3.2"/><circle cx="357.8" cy="421.6" r="3.2"/><path d="M351.6 412.1 V415.5 M345.40000000000003 418.4 V417.1 Q345.40000000000003 415.5 347.0 415.5 H356.20000000000005 Q357.8 415.5 357.8 417.1 V418.4"/></g><g fill="none" stroke="#424242" stroke-width="1.35"><circle cx="525.7" cy="408.5" r="3.6"/><circle cx="519.5" cy="421.6" r="3.2"/><circle cx="531.9000000000001" cy="421.6" r="3.2"/><path d="M525.7 412.1 V415.5 M519.5 418.4 V417.1 Q519.5 415.5 521.1 415.5 H530.3000000000001 Q531.9000000000001 415.5 531.9000000000001 417.1 V418.4"/></g><circle cx="217.2" cy="501.6" r="6.6" fill="none" stroke="#616161" stroke-width="1.4"/><path d="M222 506.4 L228.2 512.2" stroke="#616161" stroke-width="1.5" stroke-linecap="round"/><path d="M1214.6 493 V510 M1208 503.6 L1214.6 510.2 L1221.2 503.6 M1207 514 H1222.4" fill="none" stroke="#424242" stroke-width="1.35" stroke-linecap="round" stroke-linejoin="round"/><g fill="none" stroke="#424242" stroke-width="1.35" stroke-linejoin="round"><rect x="1398.4" y="492.8" width="12.4" height="17.6" rx="2.2"/><path d="M1396 496 Q1394.6 496.4 1394.6 498.4 V510.4 Q1394.6 513.6 1397.8 513.6 H1405.4 Q1407.6 513.6 1408 512.4" stroke-linecap="round"/></g><path d="M1687.2 497.8 H1705.4 M1690 503.5 H1702.6 M1693.2 509.1 H1699.4" stroke="#424242" stroke-width="1.35" stroke-linecap="round" fill="none"/><g fill="none" stroke="#2f63b5" stroke-width="1.35"><circle cx="530.8" cy="660.70" r="4.2"/><path d="M530.8 664.90 V673.30 M523.9 673.30 V669.00 H537.7 V673.30"/><circle cx="523.9" cy="675.50" r="2.15"/><circle cx="530.8" cy="675.50" r="2.15"/><circle cx="537.7" cy="675.50" r="2.15"/></g><path d="M530.3 659.10 L532.9 661.00 L530.3 661.60Z" fill="#2f63b5"/><g fill="none" stroke="#2f63b5" stroke-width="1.4"><circle cx="1305.4" cy="659.50" r="2.7"/><circle cx="1313.6" cy="661.50" r="2.25" stroke-width="1.3"/><path d="M1303 665.20 H1306.6 Q1310.1 665.40 1310.1 668.50 V674.00 Q1310.1 677.10 1306.8 677.10 Q1303.6 677.10 1302.4 675.50"/><path d="M1310.6 666.90 H1314.6 Q1316.6 666.90 1316.6 668.90 V673.90 Q1316.6 677.10 1313.6 677.10 Q1310.6 677.10 1310.6 674.10 Z"/></g><rect x="1295.3" y="664.50" width="11.4" height="11.4" rx="1.6" fill="#2f63b5"/><path d="M1298.1 666.40 H1304.5 V668.10 H1302.6 V674.00 H1299.9 V668.10 H1298.1Z" fill="#fff"/><g fill="none" stroke="#2f63b5" stroke-width="1.35"><circle cx="530.8" cy="739.70" r="4.2"/><path d="M530.8 743.90 V752.30 M523.9 752.30 V748.00 H537.7 V752.30"/><circle cx="523.9" cy="754.50" r="2.15"/><circle cx="530.8" cy="754.50" r="2.15"/><circle cx="537.7" cy="754.50" r="2.15"/></g><path d="M530.3 738.10 L532.9 740.00 L530.3 740.60Z" fill="#2f63b5"/><g fill="none" stroke="#2f63b5" stroke-width="1.4"><circle cx="1305.4" cy="738.50" r="2.7"/><circle cx="1313.6" cy="740.50" r="2.25" stroke-width="1.3"/><path d="M1303 744.20 H1306.6 Q1310.1 744.40 1310.1 747.50 V753.00 Q1310.1 756.10 1306.8 756.10 Q1303.6 756.10 1302.4 754.50"/><path d="M1310.6 745.90 H1314.6 Q1316.6 745.90 1316.6 747.90 V752.90 Q1316.6 756.10 1313.6 756.10 Q1310.6 756.10 1310.6 753.10 Z"/></g><rect x="1295.3" y="743.50" width="11.4" height="11.4" rx="1.6" fill="#2f63b5"/><path d="M1298.1 745.40 H1304.5 V747.10 H1302.6 V753.00 H1299.9 V747.10 H1298.1Z" fill="#fff"/><g fill="none" stroke="#2f63b5" stroke-width="1.35"><circle cx="530.8" cy="818.70" r="4.2"/><path d="M530.8 822.90 V831.30 M523.9 831.30 V827.00 H537.7 V831.30"/><circle cx="523.9" cy="833.50" r="2.15"/><circle cx="530.8" cy="833.50" r="2.15"/><circle cx="537.7" cy="833.50" r="2.15"/></g><path d="M530.3 817.10 L532.9 819.00 L530.3 819.60Z" fill="#2f63b5"/><g fill="none" stroke="#2f63b5" stroke-width="1.4"><circle cx="1305.4" cy="817.50" r="2.7"/><circle cx="1313.6" cy="819.50" r="2.25" stroke-width="1.3"/><path d="M1303 823.20 H1306.6 Q1310.1 823.40 1310.1 826.50 V832.00 Q1310.1 835.10 1306.8 835.10 Q1303.6 835.10 1302.4 833.50"/><path d="M1310.6 824.90 H1314.6 Q1316.6 824.90 1316.6 826.90 V831.90 Q1316.6 835.10 1313.6 835.10 Q1310.6 835.10 1310.6 832.10 Z"/></g><rect x="1295.3" y="822.50" width="11.4" height="11.4" rx="1.6" fill="#2f63b5"/><path d="M1298.1 824.40 H1304.5 V826.10 H1302.6 V832.00 H1299.9 V826.10 H1298.1Z" fill="#fff"/><g fill="none" stroke="#2f63b5" stroke-width="1.35"><circle cx="530.8" cy="898.70" r="4.2"/><path d="M530.8 902.90 V911.30 M523.9 911.30 V907.00 H537.7 V911.30"/><circle cx="523.9" cy="913.50" r="2.15"/><circle cx="530.8" cy="913.50" r="2.15"/><circle cx="537.7" cy="913.50" r="2.15"/></g><path d="M530.3 897.10 L532.9 899.00 L530.3 899.60Z" fill="#2f63b5"/><g fill="none" stroke="#2f63b5" stroke-width="1.4"><circle cx="1305.4" cy="897.50" r="2.7"/><circle cx="1313.6" cy="899.50" r="2.25" stroke-width="1.3"/><path d="M1303 903.20 H1306.6 Q1310.1 903.40 1310.1 906.50 V912.00 Q1310.1 915.10 1306.8 915.10 Q1303.6 915.10 1302.4 913.50"/><path d="M1310.6 904.90 H1314.6 Q1316.6 904.90 1316.6 906.90 V911.90 Q1316.6 915.10 1313.6 915.10 Q1310.6 915.10 1310.6 912.10 Z"/></g><rect x="1295.3" y="902.50" width="11.4" height="11.4" rx="1.6" fill="#2f63b5"/><path d="M1298.1 904.40 H1304.5 V906.10 H1302.6 V912.00 H1299.9 V906.10 H1298.1Z" fill="#fff"/><g fill="none" stroke="#2f63b5" stroke-width="1.35"><circle cx="530.8" cy="977.70" r="4.2"/><path d="M530.8 981.90 V990.30 M523.9 990.30 V986.00 H537.7 V990.30"/><circle cx="523.9" cy="992.50" r="2.15"/><circle cx="530.8" cy="992.50" r="2.15"/><circle cx="537.7" cy="992.50" r="2.15"/></g><path d="M530.3 976.10 L532.9 978.00 L530.3 978.60Z" fill="#2f63b5"/><g fill="none" stroke="#2f63b5" stroke-width="1.4"><circle cx="1305.4" cy="976.50" r="2.7"/><circle cx="1313.6" cy="978.50" r="2.25" stroke-width="1.3"/><path d="M1303 982.20 H1306.6 Q1310.1 982.40 1310.1 985.50 V991.00 Q1310.1 994.10 1306.8 994.10 Q1303.6 994.10 1302.4 992.50"/><path d="M1310.6 983.90 H1314.6 Q1316.6 983.90 1316.6 985.90 V990.90 Q1316.6 994.10 1313.6 994.10 Q1310.6 994.10 1310.6 991.10 Z"/></g><rect x="1295.3" y="981.50" width="11.4" height="11.4" rx="1.6" fill="#2f63b5"/><path d="M1298.1 983.40 H1304.5 V985.10 H1302.6 V991.00 H1299.9 V985.10 H1298.1Z" fill="#fff"/><g fill="none" stroke="#2f63b5" stroke-width="1.35"><circle cx="530.8" cy="1056.70" r="4.2"/><path d="M530.8 1060.90 V1069.30 M523.9 1069.30 V1065.00 H537.7 V1069.30"/><circle cx="523.9" cy="1071.50" r="2.15"/><circle cx="530.8" cy="1071.50" r="2.15"/><circle cx="537.7" cy="1071.50" r="2.15"/></g><path d="M530.3 1055.10 L532.9 1057.00 L530.3 1057.60Z" fill="#2f63b5"/><g fill="none" stroke="#2f63b5" stroke-width="1.4"><circle cx="1305.4" cy="1055.50" r="2.7"/><circle cx="1313.6" cy="1057.50" r="2.25" stroke-width="1.3"/><path d="M1303 1061.20 H1306.6 Q1310.1 1061.40 1310.1 1064.50 V1070.00 Q1310.1 1073.10 1306.8 1073.10 Q1303.6 1073.10 1302.4 1071.50"/><path d="M1310.6 1062.90 H1314.6 Q1316.6 1062.90 1316.6 1064.90 V1069.90 Q1316.6 1073.10 1313.6 1073.10 Q1310.6 1073.10 1310.6 1070.10 Z"/></g><rect x="1295.3" y="1060.50" width="11.4" height="11.4" rx="1.6" fill="#2f63b5"/><path d="M1298.1 1062.40 H1304.5 V1064.10 H1302.6 V1070.00 H1299.9 V1064.10 H1298.1Z" fill="#fff"/><g fill="none" stroke="#2f63b5" stroke-width="1.35"><circle cx="530.8" cy="1135.70" r="4.2"/><path d="M530.8 1139.90 V1148.30 M523.9 1148.30 V1144.00 H537.7 V1148.30"/><circle cx="523.9" cy="1150.50" r="2.15"/><circle cx="530.8" cy="1150.50" r="2.15"/><circle cx="537.7" cy="1150.50" r="2.15"/></g><path d="M530.3 1134.10 L532.9 1136.00 L530.3 1136.60Z" fill="#2f63b5"/><g fill="none" stroke="#2f63b5" stroke-width="1.4"><circle cx="1305.4" cy="1134.50" r="2.7"/><circle cx="1313.6" cy="1136.50" r="2.25" stroke-width="1.3"/><path d="M1303 1140.20 H1306.6 Q1310.1 1140.40 1310.1 1143.50 V1149.00 Q1310.1 1152.10 1306.8 1152.10 Q1303.6 1152.10 1302.4 1150.50"/><path d="M1310.6 1141.90 H1314.6 Q1316.6 1141.90 1316.6 1143.90 V1148.90 Q1316.6 1152.10 1313.6 1152.10 Q1310.6 1152.10 1310.6 1149.10 Z"/></g><rect x="1295.3" y="1139.50" width="11.4" height="11.4" rx="1.6" fill="#2f63b5"/><path d="M1298.1 1141.40 H1304.5 V1143.10 H1302.6 V1149.00 H1299.9 V1143.10 H1298.1Z" fill="#fff"/><g fill="none" stroke="#2f63b5" stroke-width="1.35"><circle cx="530.8" cy="1215.70" r="4.2"/><path d="M530.8 1219.90 V1228.30 M523.9 1228.30 V1224.00 H537.7 V1228.30"/><circle cx="523.9" cy="1230.50" r="2.15"/><circle cx="530.8" cy="1230.50" r="2.15"/><circle cx="537.7" cy="1230.50" r="2.15"/></g><path d="M530.3 1214.10 L532.9 1216.00 L530.3 1216.60Z" fill="#2f63b5"/><g fill="none" stroke="#2f63b5" stroke-width="1.4"><circle cx="1305.4" cy="1214.50" r="2.7"/><circle cx="1313.6" cy="1216.50" r="2.25" stroke-width="1.3"/><path d="M1303 1220.20 H1306.6 Q1310.1 1220.40 1310.1 1223.50 V1229.00 Q1310.1 1232.10 1306.8 1232.10 Q1303.6 1232.10 1302.4 1230.50"/><path d="M1310.6 1221.90 H1314.6 Q1316.6 1221.90 1316.6 1223.90 V1228.90 Q1316.6 1232.10 1313.6 1232.10 Q1310.6 1232.10 1310.6 1229.10 Z"/></g><rect x="1295.3" y="1219.50" width="11.4" height="11.4" rx="1.6" fill="#2f63b5"/><path d="M1298.1 1221.40 H1304.5 V1223.10 H1302.6 V1229.00 H1299.9 V1223.10 H1298.1Z" fill="#fff"/><g fill="none" stroke="#2f63b5" stroke-width="1.35"><circle cx="530.8" cy="1294.70" r="4.2"/><path d="M530.8 1298.90 V1307.30 M523.9 1307.30 V1303.00 H537.7 V1307.30"/><circle cx="523.9" cy="1309.50" r="2.15"/><circle cx="530.8" cy="1309.50" r="2.15"/><circle cx="537.7" cy="1309.50" r="2.15"/></g><path d="M530.3 1293.10 L532.9 1295.00 L530.3 1295.60Z" fill="#2f63b5"/><g fill="none" stroke="#2f63b5" stroke-width="1.4"><circle cx="1305.4" cy="1293.50" r="2.7"/><circle cx="1313.6" cy="1295.50" r="2.25" stroke-width="1.3"/><path d="M1303 1299.20 H1306.6 Q1310.1 1299.40 1310.1 1302.50 V1308.00 Q1310.1 1311.10 1306.8 1311.10 Q1303.6 1311.10 1302.4 1309.50"/><path d="M1310.6 1300.90 H1314.6 Q1316.6 1300.90 1316.6 1302.90 V1307.90 Q1316.6 1311.10 1313.6 1311.10 Q1310.6 1311.10 1310.6 1308.10 Z"/></g><rect x="1295.3" y="1298.50" width="11.4" height="11.4" rx="1.6" fill="#2f63b5"/><path d="M1298.1 1300.40 H1304.5 V1302.10 H1302.6 V1308.00 H1299.9 V1302.10 H1298.1Z" fill="#fff"/><rect x="1780.4" y="546" width="22.6" height="792" fill="#fafafa"/><path d="M1784.6 565 L1791.6 555.4 L1798.6 565Z" fill="#8a8a8a" stroke="#8a8a8a" stroke-width="1" stroke-linejoin="round"/><rect x="1785.4" y="575" width="12.6" height="742" rx="6.3" fill="#8f8f8f"/><rect x="1917.4" y="330" width="20.6" height="1008" fill="#fafafa"/><path d="M1921.8 346.4 L1928.6 337.4 L1935.4 346.4Z" fill="#8a8a8a" stroke="#8a8a8a" stroke-width="1" stroke-linejoin="round"/><rect x="1922.2" y="404" width="12.6" height="119.6" rx="6.3" fill="#8f8f8f"/><path d="M1922 1323.4 L1928.6 1333 L1935.4 1323.4Z" fill="#8a8a8a" stroke="#8a8a8a" stroke-width="1" stroke-linejoin="round"/><rect x="63.4" y="1299.4" width="43" height="39" fill="#e9e2da"/><rect x="64" y="1300" width="42" height="38" fill="#5583e3"/><g fill="none" stroke="#fff" stroke-width="1.6" stroke-linejoin="round" stroke-linecap="round"><path d="M76.8 1318.2 L86.9 1311.6 L92.3 1315.3 L82.2 1322.2Z"/><path d="M80.6 1322.8 L89.4 1317.2 L94.3 1320.9 L84.2 1327.8 L78.8 1323.9Z"/><path d="M79.6 1320.6 L83.3 1323.6 L90.6 1318.6"/></g><path d="M0 1338 V1330 Q0.5 1337 8 1338Z" fill="#222"/><path d="M1938 1338 V1330 Q1937.5 1337 1930 1338Z" fill="#222"/></svg>
<!-- avatars -->
<svg width="1938" height="1338" style="left:0;top:0"><defs><clipPath id="avc"><circle cx="24" cy="24" r="24"/></clipPath><filter id="avb" x="-5%" y="-5%" width="110%" height="110%"><feGaussianBlur stdDeviation="0.7"/></filter></defs><g transform="translate(194,644.20)"><g clip-path="url(#avc)"><g filter="url(#avb)"><rect width="48" height="48" fill="#e9f0f6"/><rect width="14" height="48" fill="#cfdfec"/><rect x="34" width="14" height="48" fill="#dce8f1"/><rect x="8" y="12" width="4" height="28" fill="#b9c9d8" opacity=".7"/><rect x="30" y="2" width="3" height="30" fill="#fff" opacity=".8"/>
<path d="M14.5 20 Q13.5 8 23 8 Q31 8 30.5 20 Q31 26 30 29 L15 30 Q13.5 26 14.5 20Z" fill="#2a2124"/>
<ellipse cx="21.2" cy="19" rx="4.9" ry="6.4" fill="#c4907a"/><rect x="18.6" y="24" width="5.4" height="6" fill="#b98470"/>
<path d="M7 42 Q9 33 18.5 30 L22 32.5 L27 28.5 Q36 28 39.5 35 L41 48 H7Z" fill="#f0c51c"/><path d="M21 33 V48" stroke="#c9a012" stroke-width=".8"/></g></g></g><circle cx="235.6" cy="685.8" r="8" fill="#fff"/><circle cx="235.6" cy="685.8" r="6" fill="#fff" stroke="#616161" stroke-width="1.2"/><path d="M233.2 683.4 L238.0 688.1999999999999 M238.0 683.4 L233.2 688.1999999999999" stroke="#616161" stroke-width="1.2" stroke-linecap="round"/><g transform="translate(194,723.20)"><g clip-path="url(#avc)"><g filter="url(#avb)"><rect width="48" height="48" fill="#fbfaf7"/><rect x="0" y="8" width="7" height="34" fill="#4a3320"/><rect x="4.4" y="10" width="3.4" height="30" fill="#e6d9bb"/>
<path d="M8 30 Q5 16 14 8 Q20 0 30 1.4 Q40 4 41 18 Q45 26 43 33 Q41 38 38 36 L36 46 L14 48 Q6 42 8 30Z" fill="#74533f"/><path d="M10 18 Q9 30 12 42" stroke="#4e3527" stroke-width="3.4" fill="none"/><path d="M37 12 Q42 22 40 33" stroke="#8f6d54" stroke-width="3" fill="none"/><path d="M12 36 Q16 44 15 48" stroke="#a8703f" stroke-width="2.6" fill="none"/>
<ellipse cx="22" cy="23" rx="9.3" ry="13.4" fill="#dcaa93"/><path d="M12.6 22 Q12 7 24 6 Q33 7 32 20 Q27 11 21 12.4 Q15 14 12.6 22Z" fill="#6a4935"/>
<rect x="19" y="34" width="12" height="12" fill="#d9a58e"/>
<path d="M17 28.6 Q22 31.4 27 28.4" stroke="#b56e66" stroke-width="1.2" fill="none"/><path d="M15.6 19.8 h4.4 M24 19.8 h4.4" stroke="#4a3428" stroke-width="1.3"/>
<path d="M26 42 L34 39 L36 48 H24Z M13 45 L19 46 L19 48 H13Z" fill="#e0532f"/></g></g></g><circle cx="235.6" cy="764.8" r="8" fill="#fff"/><circle cx="235.6" cy="764.8" r="6" fill="#fff" stroke="#616161" stroke-width="1.2"/><path d="M233.2 762.4 L238.0 767.1999999999999 M238.0 762.4 L233.2 767.1999999999999" stroke="#616161" stroke-width="1.2" stroke-linecap="round"/><g transform="translate(194,802.20)"><g clip-path="url(#avc)"><g filter="url(#avb)"><rect width="48" height="48" fill="#eceae4"/><rect y="12.5" width="48" height="4" fill="#6a655e"/><rect y="16.5" width="48" height="14" fill="#d8d6cf"/><rect x="36" y="16" width="3" height="16" fill="#8a867e"/><rect x="43" y="18" width="5" height="14" fill="#f4f4f0"/><rect y="23" width="8" height="16" fill="#a5c63f"/><rect x="4" y="20" width="2.4" height="14" fill="#77736c"/>
<path d="M7 48 Q6 30 16 26.5 L24 24 Q38 24 42 33 L44 48Z" fill="#898683"/><path d="M15 24 L19 21.6 L23 24 L21 29 L17 29Z" fill="#c5c2bd"/>
<path d="M17.4 25.4 L20.6 25.4 L21.6 38 L18.6 47 L15.6 40Z" fill="#4b2e80"/>
<ellipse cx="18.8" cy="7.6" rx="7.6" ry="5.6" fill="#2b201b"/><ellipse cx="17.6" cy="14" rx="6" ry="7.6" fill="#d9a586"/><path d="M11.4 9.6 Q14 5 19 5.4 Q25 5.4 25.6 11 Q21 8 16 9 Q13 9.4 11.4 12Z" fill="#2b201b"/>
<path d="M14.4 18 Q17.6 20 20.6 17.6" stroke="#fff" stroke-width="1" fill="none"/></g></g></g><circle cx="235.6" cy="843.8" r="8" fill="#fff"/><circle cx="235.6" cy="843.8" r="6" fill="#fff" stroke="#616161" stroke-width="1.2"/><path d="M233.2 841.4 L238.0 846.1999999999999 M238.0 841.4 L233.2 846.1999999999999" stroke="#616161" stroke-width="1.2" stroke-linecap="round"/><g transform="translate(194,882.20)"><g clip-path="url(#avc)"><g filter="url(#avb)"><rect width="48" height="48" fill="#b3bab8"/><rect x="2" y="8" width="20" height="30" fill="#c7cbc4"/><rect x="8" y="14" width="10" height="8" fill="#d2c9a4"/><rect x="8" y="28" width="12" height="9" fill="#c6b58e"/><rect x="38" y="10" width="10" height="30" fill="#c9cdc8"/><rect x="0" y="34" width="10" height="8" fill="#8fa7b8"/>
<path d="M8 48 Q9 40 20 36.6 L36 33 Q44 36 45 48Z" fill="#c2443f"/><path d="M22 36 L28 41 L34 34" fill="#a93632"/>
<ellipse cx="28" cy="21.6" rx="8.6" ry="10.8" fill="#e2b59c"/><path d="M17 18 Q15 6 27 4.6 Q40 4 40.4 16 L39 21 Q37 13 33 11.4 Q24 13 19.6 12 Q18 15 18.4 20Z" fill="#3a2b28"/>
<path d="M20 18.6 h7 v3.6 h-7Z M29 18.6 h7 v3.6 h-7Z M27 19.6 h2" fill="none" stroke="#2a2426" stroke-width="1.1"/><path d="M23 27.6 Q28 31 33 27.4 Q28 29 23 27.6Z" fill="#fff" stroke="#a8675a" stroke-width=".6"/></g></g></g><circle cx="235.6" cy="923.8" r="8" fill="#fff"/><circle cx="235.6" cy="923.8" r="6" fill="#fff" stroke="#616161" stroke-width="1.2"/><path d="M233.2 921.4 L238.0 926.1999999999999 M238.0 921.4 L233.2 926.1999999999999" stroke="#616161" stroke-width="1.2" stroke-linecap="round"/><g transform="translate(194,961.20)"><g clip-path="url(#avc)"><g filter="url(#avb)"><rect width="48" height="48" fill="#b3b0a6"/><rect y="0" width="48" height="4" fill="#7d776c"/><rect y="10" width="48" height="1.6" fill="#e6e3da"/><rect y="24" width="48" height="1.6" fill="#d6d3ca"/><rect x="4" y="12" width="10" height="6" fill="#c8b79a"/><rect x="31" y="11.6" width="9" height="5" fill="#c97a3b"/><rect x="31" y="19" width="6" height="4.6" fill="#6fae4b"/><rect x="40" y="18" width="5" height="6" fill="#7db85a"/><rect x="22" y="1" width="8" height="4" fill="#a8c0d6"/>
<path d="M4 48 Q5 34 14 31 L22 28.6 L30 29 Q38 26 46 26 L48 48Z" fill="#a9bfda"/><path d="M17 30 L22.6 35 L28 29.6" fill="#8fa9c8"/>
<ellipse cx="22.8" cy="19.6" rx="8.6" ry="10.2" fill="#c99070"/><path d="M13.6 17 Q12.6 5.6 23 5 Q33 5 32.4 17 Q30 10.6 23 10.4 Q16 10.6 13.6 17Z" fill="#1f1a18"/>
<path d="M18.6 24.6 Q22.8 28 27.4 24.6" stroke="#fff" stroke-width="1.1" fill="none"/><path d="M17 16.6 h4 M25 16.6 h4" stroke="#2a1f1a" stroke-width="1.1"/></g></g></g><circle cx="235.6" cy="1002.8" r="8" fill="#fff"/><circle cx="235.6" cy="1002.8" r="6" fill="#fff" stroke="#616161" stroke-width="1.2"/><path d="M233.2 1000.4 L238.0 1005.1999999999999 M238.0 1000.4 L233.2 1005.1999999999999" stroke="#616161" stroke-width="1.2" stroke-linecap="round"/><g transform="translate(194,1040.20)"><g clip-path="url(#avc)"><g filter="url(#avb)"><rect width="48" height="48" fill="#b7b5b0"/><rect width="17" height="48" fill="#f1eee7"/><rect x="3.6" y="4" width="1.6" height="40" fill="#dcd8ce"/><rect x="8" y="4" width="1.6" height="40" fill="#dcd8ce"/><rect x="12" y="4" width="1.4" height="40" fill="#e2ded5"/>
<path d="M7 48 Q9 42 15 40.6 L22 41 L24 48Z" fill="#f3f2ef"/><path d="M18 48 Q22 42 30 44 L34 48Z" fill="#2b2a2a"/>
<ellipse cx="27" cy="27" rx="13.6" ry="19.6" fill="#9a6a50"/><ellipse cx="26" cy="15" rx="8.6" ry="5" fill="#b78769"/><ellipse cx="21" cy="30" rx="3.6" ry="5" fill="#a8785c"/>
<path d="M14 19 Q13 3.6 28 2.6 Q42 3.6 41 19 Q38 8.6 28 8.4 Q17 8.6 14 19Z" fill="#2a2420"/>
<path d="M19.6 35 Q25 39.6 30.6 34.6 Q25 37 19.6 35Z" fill="#fff" stroke="#fff" stroke-width=".8"/><path d="M17.6 23 h6 M28.6 23 h6" stroke="#24130e" stroke-width="1.6"/><path d="M22 30.6 Q25.4 32.6 29 30.4" stroke="#6a4030" stroke-width="1.3" fill="none"/>
<ellipse cx="40.6" cy="26" rx="2" ry="4.4" fill="#8a5b44"/></g></g></g><circle cx="235.6" cy="1081.8" r="8" fill="#fff"/><circle cx="235.6" cy="1081.8" r="6" fill="#fff" stroke="#616161" stroke-width="1.2"/><path d="M233.2 1079.3999999999999 L238.0 1084.2 M238.0 1079.3999999999999 L233.2 1084.2" stroke="#616161" stroke-width="1.2" stroke-linecap="round"/><g transform="translate(194,1119.20)"><g clip-path="url(#avc)"><g filter="url(#avb)"><rect width="48" height="48" fill="#f3f0e6"/><rect x="2" y="17" width="13" height="6" fill="#bccaa0"/><rect x="0" y="8" width="20" height="8" fill="#ebe6d6"/><rect x="38" y="0" width="10" height="48" fill="#f8f7f2"/><rect x="40" y="31" width="8" height="3" fill="#e3d060"/>
<path d="M0 24.6 Q9 23 16 25 L17 39 L0 42Z" fill="#7a3f22"/><rect x="13" y="29" width="5" height="8" fill="#4a2a1c"/>
<path d="M5 45 Q11 37 22 36 L34 38 L34 48 H4Z" fill="#cf3d2c"/>
<path d="M17.6 24 Q16.6 5 30 4.6 Q43 5 42.4 24 Q42.6 30 41 33 L19 33 Q17.4 29 17.6 24Z" fill="#7b5640"/>
<ellipse cx="29.4" cy="24.6" rx="11" ry="16.4" fill="#e9baa2"/><path d="M19 19 Q21 7.6 29.6 7.4 Q39 7.6 40.6 19 Q36 11 29.6 11.6 Q23 11.6 19 19Z" fill="#85593f"/>
<path d="M23.6 29.6 Q29.4 34.6 35 29.4 Q29.4 31.6 23.6 29.6Z" fill="#fff" stroke="#fff" stroke-width="1"/><path d="M22.6 30 Q29.4 36 36 29.6" stroke="#c0776a" stroke-width=".8" fill="none"/><path d="M20.6 21 h7.6 v3.4 h-7.6Z M31 21 h7.6 v3.4 h-7.6Z" fill="none" stroke="#9a8478" stroke-width=".7"/>
<path d="M20 38 Q22 34 27 37 L27 46 H19Z" fill="#e6b39a"/><path d="M21.6 38 V45 M24 38 V45" stroke="#fff" stroke-width="1"/></g></g></g><circle cx="235.6" cy="1160.8" r="8" fill="#fff"/><circle cx="235.6" cy="1160.8" r="6" fill="#fff" stroke="#616161" stroke-width="1.2"/><path d="M233.2 1158.3999999999999 L238.0 1163.2 M238.0 1158.3999999999999 L233.2 1163.2" stroke="#616161" stroke-width="1.2" stroke-linecap="round"/><g transform="translate(194,1199.20)"><g clip-path="url(#avc)"><g filter="url(#avb)"><rect width="48" height="48" fill="#f6f5f3"/><rect x="7.6" y="2" width="1.8" height="37" fill="#3b4757"/><rect x="22.4" y="0" width="1.6" height="9" fill="#4a5666"/><rect x="24" y="11" width="17" height="1.3" fill="#56606e"/><rect x="39" y="7" width="3.4" height="34" fill="#1f2833"/><rect x="9.4" y="2" width="13" height="9" fill="#eef0f2"/>
<path d="M5 48 Q5 38 13 35.4 L18 33.4 L26 33.6 Q33 35.6 35 40 L36 48Z" fill="#eab58d"/><path d="M15.6 40 L19.6 37 L24.6 40 L25 48 H15Z" fill="#f5f1eb"/><path d="M13 36 L19.6 37.4 L16 42Z M26 35 L20 37.4 L24.6 41.6Z" fill="#dfa67c"/>
<ellipse cx="19.2" cy="23.6" rx="8.2" ry="10.6" fill="#d9a788"/><path d="M10 20.6 Q9 8 19.6 7.4 Q30 8 28.6 20.6 Q26 13 19.6 13 Q13 13 10 20.6Z" fill="#6e6a67"/>
<path d="M14.6 20.6 h3.6 M21 20.6 h3.6" stroke="#4a3a32" stroke-width="1"/><path d="M15.4 28.4 Q19.2 31 23 28.4" stroke="#fff" stroke-width="1" fill="none"/></g></g></g><circle cx="235.6" cy="1240.8" r="8" fill="#fff"/><circle cx="235.6" cy="1240.8" r="6" fill="#fff" stroke="#616161" stroke-width="1.2"/><path d="M233.2 1238.3999999999999 L238.0 1243.2 M238.0 1238.3999999999999 L233.2 1243.2" stroke="#616161" stroke-width="1.2" stroke-linecap="round"/><g transform="translate(194,1278.20)"><g clip-path="url(#avc)"><g filter="url(#avb)"><rect width="48" height="48" fill="#f6f5f3"/><rect x="7.6" y="2" width="1.8" height="37" fill="#3b4757"/><rect x="22.4" y="0" width="1.6" height="9" fill="#4a5666"/><rect x="24" y="11" width="17" height="1.3" fill="#56606e"/><rect x="39" y="7" width="3.4" height="34" fill="#1f2833"/><rect x="9.4" y="2" width="13" height="9" fill="#eef0f2"/>
<path d="M5 48 Q5 38 13 35.4 L18 33.4 L26 33.6 Q33 35.6 35 40 L36 48Z" fill="#eab58d"/><path d="M15.6 40 L19.6 37 L24.6 40 L25 48 H15Z" fill="#f5f1eb"/><path d="M13 36 L19.6 37.4 L16 42Z M26 35 L20 37.4 L24.6 41.6Z" fill="#dfa67c"/>
<ellipse cx="19.2" cy="23.6" rx="8.2" ry="10.6" fill="#d9a788"/><path d="M10 20.6 Q9 8 19.6 7.4 Q30 8 28.6 20.6 Q26 13 19.6 13 Q13 13 10 20.6Z" fill="#6e6a67"/>
<path d="M14.6 20.6 h3.6 M21 20.6 h3.6" stroke="#4a3a32" stroke-width="1"/><path d="M15.4 28.4 Q19.2 31 23 28.4" stroke="#fff" stroke-width="1" fill="none"/></g></g></g><circle cx="235.6" cy="1319.8" r="8" fill="#fff"/><circle cx="235.6" cy="1319.8" r="6" fill="#fff" stroke="#616161" stroke-width="1.2"/><path d="M233.2 1317.3999999999999 L238.0 1322.2 M238.0 1317.3999999999999 L233.2 1322.2" stroke="#616161" stroke-width="1.2" stroke-linecap="round"/><g transform="translate(1886,9.7) scale(0.9)"><g clip-path="url(#avc)"><g filter="url(#avb)"><rect width="48" height="48" fill="#e1e4e4"/><rect x="30" width="18" height="48" fill="#dadede"/>
<path d="M4 48 Q5 36 15 33 L20 31 L28 31 L34 33 Q43 36 44 48Z" fill="#f6f6f5"/><path d="M20 31 Q24 35 28 31 L28 28 H20Z" fill="#cf9e84"/>
<ellipse cx="24" cy="18.6" rx="6.6" ry="9" fill="#d8a78c"/><path d="M17 16 Q16 6.6 24 6.4 Q32 6.6 31 16 Q29.6 10.6 24 10.4 Q18.6 10.6 17 16Z" fill="#6c4b3a"/>
<path d="M21 23 Q24 25.4 27 23" stroke="#fff" stroke-width=".9" fill="none"/><path d="M20 16.6 h2.6 M25.4 16.6 h2.6" stroke="#4a342a" stroke-width=".9"/></g></g></g></svg>
</body></html>
